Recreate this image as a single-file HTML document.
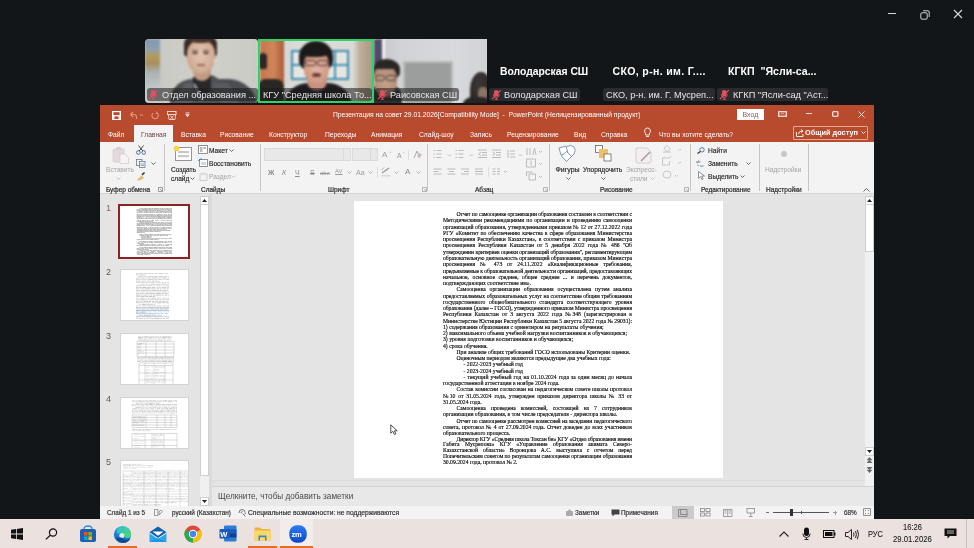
<!DOCTYPE html>
<html><head><meta charset="utf-8">
<style>
*{margin:0;padding:0;box-sizing:border-box}
html,body{width:974px;height:548px;overflow:hidden;background:#131619;font-family:"Liberation Sans",sans-serif}
#root{position:absolute;left:0;top:0;width:974px;height:548px;will-change:transform}
.a{position:absolute}
.t{position:absolute;white-space:nowrap;line-height:1}
svg{position:absolute;overflow:visible}
/* zoom tiles */
.tile{position:absolute;top:39px;height:64px;overflow:hidden}
.lbl{position:absolute;top:88px;height:13px;background:rgba(28,28,30,.55);border-radius:3px;color:#e6e6e6;font-size:9.2px;line-height:14.5px;white-space:nowrap;overflow:hidden}
.bold{position:absolute;top:66px;color:#fff;font-weight:bold;font-size:10.6px;line-height:11px;white-space:nowrap}
/* ppt */
.tab{position:absolute;top:131px;color:#fff;font-size:6.7px;line-height:7px;white-space:nowrap}
.rs{position:absolute;top:144px;width:1px;height:47px;background:#c6c6c6}
.gl{position:absolute;top:186px;font-size:6.5px;line-height:7px;color:#2a2a2a;white-space:nowrap;-webkit-text-stroke:0.2px #2a2a2a}
.rt{position:absolute;font-size:6.6px;line-height:7px;color:#262626;white-space:nowrap;-webkit-text-stroke:0.15px #262626}
.rtg{position:absolute;font-size:6.6px;line-height:7px;color:#a4a4a4;white-space:nowrap}
.thumb{position:absolute;left:120px;width:69px;height:52px;background:#fff;border:1px solid #d4d4d4;overflow:hidden}
.num{position:absolute;left:106px;font-size:9px;line-height:9px;color:#5a5a5a}
#slide{position:absolute;left:354px;top:201px;width:369px;height:277px;background:#fff}
#doc{position:absolute;left:89px;top:10px;width:189px;font-family:"Liberation Serif",serif;font-size:5.68px;line-height:6.19px;color:#000;white-space:nowrap;-webkit-text-stroke:0.12px #000}
#doc div{position:absolute;left:0;width:189px;height:6.19px;white-space:nowrap}
#doc .j{text-align:justify;text-align-last:justify}
#doc .i1{padding-left:13.5px}
#doc .i2{padding-left:20.5px}
.st{position:absolute;top:509px;font-size:6.4px;line-height:7px;color:#2a2a2a;white-space:nowrap;-webkit-text-stroke:0.15px #2a2a2a}
</style></head><body><div id="root">

<!-- zoom window controls -->
<div class="a" style="left:888px;top:13px;width:8px;height:1px;background:#d8d8d8"></div>
<svg style="left:919.5px;top:9.5px" width="12" height="11"><rect x="0.8" y="2.8" width="6.4" height="6.4" rx="1.2" fill="none" stroke="#d0d0d0" stroke-width="1"/><path d="M3 0.8 H8 Q9.2 0.8 9.2 2 V7" fill="none" stroke="#d0d0d0" stroke-width="1"/></svg>
<svg style="left:953px;top:9px" width="10" height="10"><path d="M1 1 L9 9 M9 1 L1 9" stroke="#d8d8d8" stroke-width="1.1"/></svg>

<!-- ===== video tiles ===== -->
<!-- tile 1 -->
<div class="tile" style="left:145px;width:113px;border-radius:4px;background:#cacac5">
 <div class="a" style="left:0;top:0;width:113px;height:64px;filter:blur(0.8px)">
  <div class="a" style="left:0;top:0;width:113px;height:64px;background:linear-gradient(90deg,#c2c4c4 0,#cbcbc6 20%,#d0d0cb 55%,#cbcbc5 100%)"></div>
  <div class="a" style="left:0;top:0;width:15px;height:64px;background:linear-gradient(180deg,#8298b0 0,#8fa0b0 16%,#b29a5e 26%,#a8905a 38%,#a9b2b6 52%,#bfc5c7 75%,#c8c9c6 100%)"></div>
  <!-- jacket -->
  <div class="a" style="left:25px;top:40px;width:88px;height:30px;background:#4a4c50;border-radius:30px 40px 0 0"></div>
  <div class="a" style="left:40px;top:35px;width:40px;height:30px;background:#4e5054;border-radius:20px 20px 0 0"></div>
  <div class="a" style="left:33px;top:44px;width:18px;height:24px;background:#5c5e62;transform:skewX(-28deg)"></div>
  <div class="a" style="left:72px;top:44px;width:18px;height:24px;background:#585a5e;transform:skewX(28deg)"></div>
  <div class="a" style="left:48px;top:38px;width:18px;height:18px;background:#28282a;border-radius:0 0 9px 9px"></div>
  <div class="a" style="left:52px;top:44px;width:2px;height:18px;background:#b8b8b8;transform:rotate(-25deg)"></div>
  <!-- neck -->
  <div class="a" style="left:48px;top:30px;width:18px;height:12px;background:#c39a82;border-radius:0 0 9px 9px"></div>
  <!-- hair -->
  <div class="a" style="left:39px;top:-4px;width:33px;height:22px;background:#3b2b24;border-radius:40% 40% 15% 15%"></div>
  <!-- face -->
  <div class="a" style="left:42px;top:2px;width:28px;height:33px;background:radial-gradient(ellipse at 50% 40%,#e2c3b0 0,#d4b09a 55%,#bb947e 100%);border-radius:38% 38% 50% 50%"></div>
  <div class="a" style="left:46px;top:0;width:20px;height:4px;background:#4a372e;border-radius:0 0 50% 50%"></div>
  <div class="a" style="left:47px;top:11px;width:6px;height:1px;background:#6a4a3e"></div>
  <div class="a" style="left:58px;top:11px;width:6px;height:1px;background:#6a4a3e"></div>
  <div class="a" style="left:47px;top:13px;width:6px;height:2px;background:#4a342c;border-radius:50%"></div>
  <div class="a" style="left:58px;top:13px;width:6px;height:2px;background:#4a342c;border-radius:50%"></div>
  <div class="a" style="left:52px;top:25px;width:8px;height:2px;background:#9a6a5e;border-radius:1px"></div>
  <div class="a" style="left:69px;top:21px;width:2px;height:2px;background:#f0f0f0;border-radius:50%"></div>
 </div>
</div>
<!-- tile 2 (active speaker) -->
<div class="tile" style="left:258px;width:116px;background:#d8d9d7">
 <div class="a" style="left:0;top:0;width:116px;height:64px;filter:blur(0.8px)">
  <div class="a" style="left:0;top:0;width:116px;height:64px;background:linear-gradient(90deg,#cfd0ce 0,#dcdddb 40%,#dadad6 82%,#bcae98 88%,#a89682 100%)"></div>
  <!-- door -->
  <div class="a" style="left:2px;top:0;width:24px;height:52px;background:linear-gradient(90deg,#c27650 0,#d08658 55%,#b86a44 85%,#a65c3a 100%)"></div>
  <div class="a" style="left:1px;top:14px;width:8px;height:16px;background:#2e2624;border-radius:4px 4px 2px 2px"></div>
  <div class="a" style="left:0;top:40px;width:26px;height:26px;background:#2a2624;border-radius:8px 8px 0 0"></div>
  <!-- blue frame -->
  <div class="a" style="left:33px;top:11px;width:58px;height:30px;border:2px solid #3f8db2;background:#e6e6e0"></div>
  <div class="a" style="left:76px;top:11px;width:2px;height:30px;background:#3f8db2"></div>
  <div class="a" style="left:33px;top:25px;width:58px;height:2px;background:#3f8db2"></div>
  <!-- clothing -->
  <div class="a" style="left:26px;top:44px;width:68px;height:24px;background:#1d1d20;border-radius:28px 28px 0 0"></div>
  <div class="a" style="left:49px;top:40px;width:20px;height:12px;background:#c89080;border-radius:0 0 10px 10px"></div>
  <!-- hair -->
  <div class="a" style="left:41px;top:2px;width:34px;height:30px;background:#1c1919;border-radius:50% 50% 35% 35%"></div>
  <!-- face -->
  <div class="a" style="left:46px;top:13px;width:25px;height:33px;background:radial-gradient(ellipse at 50% 50%,#e2b2a0 0,#d49e88 55%,#b88070 100%);border-radius:35% 35% 50% 50%"></div>
  <div class="a" style="left:45px;top:10px;width:27px;height:8px;background:#1c1919;border-radius:40% 40% 50% 30%"></div>
  <!-- glasses -->
  <div class="a" style="left:47px;top:21px;width:11px;height:6px;border:1px solid #4a3835;border-radius:2px"></div>
  <div class="a" style="left:59px;top:21px;width:11px;height:6px;border:1px solid #4a3835;border-radius:2px"></div>
  <div class="a" style="left:54px;top:34px;width:9px;height:4px;background:#6a3a34;border-radius:50%"></div>
 </div>
 <div class="a" style="left:0;top:0;width:116px;height:64px;border:2px solid #2bd468"></div>
</div>
<!-- tile 3 -->
<div class="tile" style="left:374px;width:113px;background:#d6d7da">
 <div class="a" style="left:0;top:0;width:113px;height:64px;filter:blur(0.9px)">
  <div class="a" style="left:0;top:0;width:113px;height:64px;background:linear-gradient(90deg,#c4c5c9 0,#d2d3d6 25%,#d8d9dc 70%,#d2d3d6 100%)"></div>
  <div class="a" style="left:0;top:0;width:8px;height:26px;background:#4f4c66"></div>
  <div class="a" style="left:8px;top:0;width:3px;height:26px;background:#f4f4f6"></div>
  <div class="a" style="left:29px;top:22px;width:50px;height:44px;background:#9b9e9c;border:2px solid #b8bbb9"></div>
  <!-- man -->
  <div class="a" style="left:-6px;top:46px;width:34px;height:22px;background:#2f2e30;border-radius:12px 12px 0 0"></div>
  <div class="a" style="left:-1px;top:20px;width:27px;height:20px;background:#2a2626;border-radius:50% 50% 30% 30%"></div>
  <div class="a" style="left:0;top:27px;width:23px;height:31px;background:radial-gradient(ellipse at 50% 50%,#c8a28a 0,#b48e78 65%,#8e6c5a 100%);border-radius:30% 40% 50% 50%"></div>
  <div class="a" style="left:0;top:25px;width:24px;height:5px;background:#2a2626;border-radius:30% 50% 40% 20%"></div>
  <div class="a" style="left:1px;top:36px;width:10px;height:6px;border:1px solid #4a4444;border-radius:2px"></div>
  <div class="a" style="left:12px;top:36px;width:10px;height:6px;border:1px solid #4a4444;border-radius:2px"></div>
  <!-- right person -->
  <div class="a" style="left:96px;top:33px;width:22px;height:36px;background:radial-gradient(ellipse at 40% 30%,#3c3736 0,#2a2625 70%);border-radius:50% 50% 10% 10%"></div>
  <div class="a" style="left:104px;top:48px;width:10px;height:14px;background:#8a7466;border-radius:40%"></div>
  <div class="a" style="left:88px;top:58px;width:30px;height:10px;background:#262425;border-radius:10px 10px 0 0"></div>
 </div>
</div>
<div class="lbl" style="left:147px;width:111px;padding-left:15px">Отдел образования ...</div>
<div class="lbl" style="left:261px;width:111px;padding-left:2px">КГУ "Средняя школа То...</div>
<div class="lbl" style="left:375px;width:84px;padding-left:15px">Раисовская СШ</div>
<div class="lbl" style="background:#2a2c30;left:489px;width:91px;padding-left:15px">Володарская СШ</div>
<div class="lbl" style="background:#2a2c30;left:603px;width:112px;padding-left:3px">СКО, р-н. им. Г. Мусреп...</div>
<div class="lbl" style="background:#2a2c30;left:717px;width:111px;padding-left:16px">КГКП "Ясли-сад "Аст...</div>
<!-- muted mic icons -->
<svg style="left:148px;top:89px" width="10" height="11"><path d="M4.3 1.2 h2 a1.2 1.2 0 0 1 1.2 1.2 v3 a2.2 2.2 0 0 1 -4.4 0 v-3 a1.2 1.2 0 0 1 1.2 -1.2 z" fill="#e4505e"/><path d="M2.3 5 Q2.3 8.6 5.3 8.6 Q8.3 8.6 8.3 5 M5.3 8.6 V10.3 M3.6 10.3 H7" fill="none" stroke="#e4505e" stroke-width="0.9"/><path d="M1 10.2 L9.8 1.2" stroke="#e4505e" stroke-width="1.1"/></svg>
<svg style="left:377px;top:89px" width="10" height="11"><path d="M4.3 1.2 h2 a1.2 1.2 0 0 1 1.2 1.2 v3 a2.2 2.2 0 0 1 -4.4 0 v-3 a1.2 1.2 0 0 1 1.2 -1.2 z" fill="#e4505e"/><path d="M2.3 5 Q2.3 8.6 5.3 8.6 Q8.3 8.6 8.3 5 M5.3 8.6 V10.3 M3.6 10.3 H7" fill="none" stroke="#e4505e" stroke-width="0.9"/><path d="M1 10.2 L9.8 1.2" stroke="#e4505e" stroke-width="1.1"/></svg>
<svg style="left:491px;top:89px" width="10" height="11"><path d="M4.3 1.2 h2 a1.2 1.2 0 0 1 1.2 1.2 v3 a2.2 2.2 0 0 1 -4.4 0 v-3 a1.2 1.2 0 0 1 1.2 -1.2 z" fill="#e4505e"/><path d="M2.3 5 Q2.3 8.6 5.3 8.6 Q8.3 8.6 8.3 5 M5.3 8.6 V10.3 M3.6 10.3 H7" fill="none" stroke="#e4505e" stroke-width="0.9"/><path d="M1 10.2 L9.8 1.2" stroke="#e4505e" stroke-width="1.1"/></svg>
<svg style="left:719px;top:89px" width="10" height="11"><path d="M4.3 1.2 h2 a1.2 1.2 0 0 1 1.2 1.2 v3 a2.2 2.2 0 0 1 -4.4 0 v-3 a1.2 1.2 0 0 1 1.2 -1.2 z" fill="#e4505e"/><path d="M2.3 5 Q2.3 8.6 5.3 8.6 Q8.3 8.6 8.3 5 M5.3 8.6 V10.3 M3.6 10.3 H7" fill="none" stroke="#e4505e" stroke-width="0.9"/><path d="M1 10.2 L9.8 1.2" stroke="#e4505e" stroke-width="1.1"/></svg>
<div class="bold" style="left:500px;font-size:10.35px">Володарская СШ</div>
<div class="bold" style="left:612.5px;letter-spacing:0.32px">СКО, р-н. им. Г....</div>
<div class="bold" style="left:728px">КГКП&nbsp; "Ясли-са...</div>

<!-- ===== PowerPoint window ===== -->
<div class="a" style="left:100px;top:105px;width:774px;height:37px;background:#b84a2e"></div>
<!-- QAT -->
<svg style="left:112px;top:111px" width="9" height="9"><rect x="0.5" y="0.5" width="8" height="8" fill="#fbe9e4" stroke="#fff"/><rect x="1.5" y="1.2" width="6" height="2.8" fill="#b84a2e"/><rect x="2.5" y="5.5" width="4" height="2.5" fill="#b84a2e"/></svg>
<svg style="left:128px;top:111px" width="18" height="9"><path d="M2.5 3.5 L5 1 M2.5 3.5 L5 6 M2.5 3.5 H6 Q8.5 3.5 8.5 6 V8" fill="none" stroke="#e7957e" stroke-width="1.1"/><path d="M12 4 h3" stroke="#e7957e" stroke-width="1"/></svg>
<svg style="left:151px;top:111px" width="8" height="9"><path d="M6 2 A3.2 3.2 0 1 1 2 2.2" fill="none" stroke="#e7957e" stroke-width="1.1"/><path d="M5 0.5 L6.5 2 L4.5 3" fill="none" stroke="#e7957e" stroke-width="1"/></svg>
<svg style="left:167px;top:111px" width="10" height="10"><rect x="0.5" y="0.5" width="8.5" height="3" fill="none" stroke="#f6d8cf" stroke-width="1"/><path d="M1.5 4 L2 8.5 H8 L8.5 4 M3.5 4.5 L6 8 M6.5 4.5 L3.5 8" fill="none" stroke="#f6d8cf" stroke-width="0.9"/></svg>
<svg style="left:185px;top:112px" width="5" height="6"><path d="M0.5 0.8 H4.5 M0.8 2.2 H4.2 L2.5 5 Z" fill="#f6d8cf" stroke="#f6d8cf" stroke-width="0.8"/></svg>
<div class="t" style="left:333px;top:112px;font-size:6.74px;color:#fff">Презентация на совет 29.01.2026[Compatibility Mode]&nbsp; - &nbsp;PowerPoint (Нелицензированный продукт)</div>
<div class="a" style="left:737px;top:109px;width:27px;height:11px;background:#fff"></div>
<div class="t" style="left:742.5px;top:111px;font-size:7px;color:#8a6058">Вход</div>
<svg style="left:778px;top:111px" width="9" height="6"><rect x="0.7" y="0.7" width="7.6" height="4.6" fill="none" stroke="#fbe1da" stroke-width="1.3"/><path d="M3 3.5 L4.5 2 L6 3.5" fill="none" stroke="#fbe1da" stroke-width="0.9"/></svg>
<div class="a" style="left:806px;top:113px;width:6px;height:1px;background:#fbe1da"></div>
<svg style="left:831.5px;top:111px" width="7" height="6"><rect x="0.7" y="0.7" width="5.2" height="4.6" rx="0.8" fill="none" stroke="#fbe1da" stroke-width="1.3"/></svg>
<svg style="left:858px;top:111px" width="7" height="7"><path d="M0.5 0.5 L6.5 6.5 M6.5 0.5 L0.5 6.5" stroke="#fbe1da" stroke-width="1"/></svg>
<!-- tabs -->
<div class="a" style="left:134px;top:125px;width:39px;height:17px;background:#f3f3f3"></div>
<div class="tab" style="left:108px">Файл</div>
<div class="tab" style="left:141px;color:#6b4a40">Главная</div>
<div class="tab" style="left:181px">Вставка</div>
<div class="tab" style="left:220px">Рисование</div>
<div class="tab" style="left:269px">Конструктор</div>
<div class="tab" style="left:325px">Переходы</div>
<div class="tab" style="left:371px">Анимация</div>
<div class="tab" style="left:419px">Слайд-шоу</div>
<div class="tab" style="left:470px">Запись</div>
<div class="tab" style="left:507px">Рецензирование</div>
<div class="tab" style="left:574px">Вид</div>
<div class="tab" style="left:601px">Справка</div>
<svg style="left:643px;top:127px" width="9" height="11"><path d="M4.5 1 A3 3 0 0 1 6.5 6.2 V8 H2.5 V6.2 A3 3 0 0 1 4.5 1 Z M3 9.5 H6" fill="none" stroke="#fff" stroke-width="0.9"/></svg>
<div class="tab" style="left:659px">Что вы хотите сделать?</div>
<div class="a" style="left:793px;top:126px;width:75px;height:14px;border:1px solid #e9a290;border-radius:1px"></div>
<svg style="left:795.5px;top:129px" width="8" height="8"><path d="M0.5 3 V7.5 H7 V5 M2.5 5 Q3 2 6 2 M5 0.5 L7 2 L5 3.5" fill="none" stroke="#fff" stroke-width="0.9"/></svg>
<div class="t" style="left:805px;top:129px;font-size:7.35px;color:#fff;font-weight:bold">Общий доступ</div>
<svg style="left:861px;top:131px" width="5" height="4"><path d="M0.5 0.5 L2.5 2.5 L4.5 0.5" fill="none" stroke="#fff" stroke-width="0.9"/></svg>

<!-- ribbon -->
<div class="a" style="left:100px;top:142px;width:774px;height:52px;background:#f3f3f3;border-bottom:1px solid #d4d4d4"></div>
<div class="rs" style="left:164px"></div>
<div class="rs" style="left:260px"></div>
<div class="rs" style="left:427px"></div>
<div class="rs" style="left:549px"></div>
<div class="rs" style="left:690px"></div>
<div class="rs" style="left:759px"></div>
<div class="rs" style="left:808px"></div>
<div class="gl" style="left:106px">Буфер обмена</div>
<div class="gl" style="left:201px">Слайды</div>
<div class="gl" style="left:328px">Шрифт</div>
<div class="gl" style="left:475px">Абзац</div>
<div class="gl" style="left:600px">Рисование</div>
<div class="gl" style="left:701px">Редактирование</div>
<div class="gl" style="left:766px">Надстройки</div>
<!-- launchers -->
<svg style="left:158px;top:187px" width="5" height="5"><path d="M0.5 0.5 H4.5 V4.5 H0.5 Z M2 2 L4.5 4.5" fill="none" stroke="#777" stroke-width="0.7"/></svg>
<svg style="left:422px;top:187px" width="5" height="5"><path d="M0.5 0.5 H4.5 V4.5 H0.5 Z M2 2 L4.5 4.5" fill="none" stroke="#999" stroke-width="0.7"/></svg>
<svg style="left:543px;top:187px" width="5" height="5"><path d="M0.5 0.5 H4.5 V4.5 H0.5 Z M2 2 L4.5 4.5" fill="none" stroke="#999" stroke-width="0.7"/></svg>
<svg style="left:684px;top:187px" width="5" height="5"><path d="M0.5 0.5 H4.5 V4.5 H0.5 Z M2 2 L4.5 4.5" fill="none" stroke="#999" stroke-width="0.7"/></svg>
<!-- clipboard -->
<svg style="left:112px;top:146px" width="18" height="18"><rect x="1" y="3" width="11" height="13" rx="1" fill="#e4dadd" stroke="#d6cace" stroke-width="0.8"/><rect x="4" y="1" width="5" height="3" rx="1" fill="#d8cdd1"/><path d="M8 8 H13 L16.5 11.5 V17.5 H8 Z" fill="#f6f3f4" stroke="#d6cace" stroke-width="0.8"/></svg>
<div class="rtg" style="left:106px;top:166px">Вставить</div>
<svg style="left:116px;top:177px" width="5" height="3"><path d="M0.5 0.5 L2.5 2.5 L4.5 0.5" fill="none" stroke="#b5b5b5" stroke-width="0.8"/></svg>
<svg style="left:136px;top:145px" width="10" height="10"><circle cx="2.3" cy="7.5" r="1.8" fill="none" stroke="#4e6e96" stroke-width="1"/><circle cx="7.7" cy="7.5" r="1.8" fill="none" stroke="#4e6e96" stroke-width="1"/><path d="M3.2 6 L7.5 0.5 M6.8 6 L2.5 0.5" stroke="#333" stroke-width="0.9"/></svg>
<svg style="left:136px;top:159px" width="10" height="9"><rect x="0.5" y="0.5" width="5.5" height="6" fill="#f3f3f3" stroke="#6a7a8e" stroke-width="0.8"/><rect x="3.5" y="2.5" width="5.5" height="6" fill="#f3f3f3" stroke="#6a7a8e" stroke-width="0.8"/><path d="M4.5 5 h3.5 M4.5 6.5 h3.5" stroke="#6a7a8e" stroke-width="0.6"/></svg>
<svg style="left:151px;top:162px" width="5" height="3"><path d="M0.5 0.5 L2.5 2.5 L4.5 0.5" fill="none" stroke="#444" stroke-width="0.8"/></svg>
<svg style="left:136px;top:171px" width="10" height="10"><path d="M1 9 L5.5 4.5 L8 7 L3.5 9.5 Z" fill="#e8b86a"/><path d="M6 4 L8.5 1.5" stroke="#333" stroke-width="1.6"/></svg>
<!-- slides -->
<svg style="left:173px;top:145px" width="20" height="17"><rect x="2.5" y="2.5" width="16" height="13" fill="#fff" stroke="#8a8a8a" stroke-width="0.9"/><rect x="5" y="6" width="11" height="2.2" fill="#c9c9c9"/><rect x="5" y="10" width="11" height="2.2" fill="#c9c9c9"/><circle cx="3.5" cy="3.5" r="2.8" fill="#f7d54a"/></svg>
<div class="rt" style="left:171px;top:166px">Создать</div>
<div class="rt" style="left:171px;top:175px">слайд</div>
<svg style="left:190px;top:177px" width="5" height="3"><path d="M0.5 0.5 L2.5 2.5 L4.5 0.5" fill="none" stroke="#444" stroke-width="0.8"/></svg>
<svg style="left:198px;top:145px" width="10" height="9"><rect x="0.5" y="0.5" width="9" height="8" fill="#fff" stroke="#777" stroke-width="0.8"/><rect x="2" y="2" width="2.5" height="5" fill="#bbb"/><rect x="5.5" y="2" width="2.5" height="2" fill="#bbb"/></svg>
<div class="rt" style="left:209px;top:147px">Макет</div>
<svg style="left:229px;top:149px" width="5" height="3"><path d="M0.5 0.5 L2.5 2.5 L4.5 0.5" fill="none" stroke="#444" stroke-width="0.8"/></svg>
<svg style="left:198px;top:158px" width="10" height="9"><rect x="1.5" y="1.5" width="8" height="7" fill="#fff" stroke="#777" stroke-width="0.8"/><path d="M0.5 3 Q1 0.5 4 1" fill="none" stroke="#3a7ac0" stroke-width="1"/><rect x="3" y="4" width="5" height="3" fill="#cfd8e8"/></svg>
<div class="rt" style="left:209px;top:160px">Восстановить</div>
<svg style="left:199px;top:172px" width="9" height="9"><rect x="1" y="2" width="7" height="6.5" fill="none" stroke="#c9c0c4" stroke-width="0.8"/><rect x="2.5" y="0.5" width="4" height="2.5" fill="#ddd"/></svg>
<div class="rtg" style="left:209px;top:173px">Раздел</div>
<svg style="left:231px;top:175px" width="5" height="3"><path d="M0.5 0.5 L2.5 2.5 L4.5 0.5" fill="none" stroke="#bbb" stroke-width="0.8"/></svg>
<!-- font -->
<div class="a" style="left:264px;top:148px;width:87px;height:13px;background:#e8e8e8;border:1px solid #d9d9d9"></div>
<div class="a" style="left:343px;top:149px;width:1px;height:11px;background:#d9d9d9"></div>
<div class="a" style="left:352px;top:148px;width:26px;height:13px;background:#e8e8e8;border:1px solid #d9d9d9"></div>
<div class="a" style="left:370px;top:149px;width:1px;height:11px;background:#d9d9d9"></div>
<div class="t" style="left:382px;top:151px;font-size:8px;color:#9a9a9a">A</div>
<div class="t" style="left:389px;top:150px;font-size:4px;color:#9a9a9a">+</div>
<div class="t" style="left:397px;top:152px;font-size:7px;color:#9a9a9a">A</div>
<div class="t" style="left:403px;top:150px;font-size:4px;color:#9a9a9a">-</div>
<div class="a" style="left:408px;top:150px;width:1px;height:10px;background:#dedede"></div>
<svg style="left:413px;top:150px" width="9" height="9"><path d="M1 8 L4 1 L7 8" fill="none" stroke="#b0a8ac" stroke-width="1"/><path d="M4 6 L7 3 L9 5 L6 8 Z" fill="#c8bcc0"/></svg>
<div class="t" style="left:268px;top:169px;font-size:7px;color:#8a8a8a;font-weight:bold">Ж</div>
<div class="t" style="left:282px;top:169px;font-size:7px;color:#8a8a8a;font-style:italic">К</div>
<div class="t" style="left:295px;top:169px;font-size:7px;color:#8a8a8a;text-decoration:underline">Ч</div>
<div class="t" style="left:310px;top:169px;font-size:7px;color:#8a8a8a;text-decoration:line-through">S</div>
<div class="t" style="left:320px;top:170px;font-size:6px;color:#9a9a9a;text-decoration:line-through">abc</div>
<div class="t" style="left:335px;top:168px;font-size:6px;color:#9a9a9a;text-decoration:underline">AV</div>
<svg style="left:347px;top:171px" width="5" height="3"><path d="M0.5 0.5 L2.5 2.5 L4.5 0.5" fill="none" stroke="#aaa" stroke-width="0.8"/></svg>
<div class="t" style="left:356px;top:169px;font-size:7px;color:#9a9a9a">Aa</div>
<svg style="left:368px;top:171px" width="5" height="3"><path d="M0.5 0.5 L2.5 2.5 L4.5 0.5" fill="none" stroke="#aaa" stroke-width="0.8"/></svg>
<div class="a" style="left:377px;top:167px;width:1px;height:11px;background:#dedede"></div>
<svg style="left:381px;top:167px" width="10" height="10"><path d="M1 6 L8 1" stroke="#9a9a9a" stroke-width="1.4"/><path d="M0.5 3 L3 0.5" stroke="#9a9a9a" stroke-width="0.8"/><rect x="0.5" y="8" width="9" height="1.5" fill="#d8d8d8"/></svg>
<svg style="left:394px;top:171px" width="5" height="3"><path d="M0.5 0.5 L2.5 2.5 L4.5 0.5" fill="none" stroke="#aaa" stroke-width="0.8"/></svg>
<div class="t" style="left:405px;top:168px;font-size:8px;color:#8a8a8a">A</div>
<svg style="left:416px;top:171px" width="5" height="3"><path d="M0.5 0.5 L2.5 2.5 L4.5 0.5" fill="none" stroke="#aaa" stroke-width="0.8"/></svg>
<!-- paragraph -->
<svg style="left:433px;top:149px" width="90" height="10" fill="none" stroke="#b4b4b4" stroke-width="0.9">
  <path d="M0.5 1.5 h1.5 M3.5 1.5 h5 M0.5 5 h1.5 M3.5 5 h5 M0.5 8.5 h1.5 M3.5 8.5 h5"/>
  <path d="M15 5.5 l1.5 1.5 l1.5 -1.5"/>
  <path d="M22.5 1.5 h1.5 M25.5 1.5 h5 M22.5 5 h1.5 M25.5 5 h5 M22.5 8.5 h1.5 M25.5 8.5 h5"/>
  <path d="M37 5.5 l1.5 1.5 l1.5 -1.5"/>
  <path d="M45 1 h9 M49 3.5 h5 M49 6 h5 M45 8.5 h9 M48 3 l-2.5 1.8 l2.5 1.8"/>
  <path d="M59 1 h9 M63 3.5 h5 M63 6 h5 M59 8.5 h9 M59.5 3 l2.5 1.8 l-2.5 1.8"/>
  <path d="M77 2 h5 M77 5 h5 M77 8 h5 M75 1 v8"/>
  <path d="M86 5.5 l1.5 1.5 l1.5 -1.5"/>
</svg>
<svg style="left:433px;top:168px" width="75" height="8" fill="none" stroke="#b4b4b4" stroke-width="0.9">
  <path d="M0.5 1 h8 M0.5 3.5 h5 M0.5 6 h8"/>
  <path d="M14.5 1 h8 M16 3.5 h5 M14.5 6 h8"/>
  <path d="M28 1 h8 M31 3.5 h5 M28 6 h8"/>
  <path d="M42 1 h8 M42 3.5 h8 M42 6 h8"/>
  <path d="M59.5 1 h3 M64 1 h3 M59.5 3.5 h3 M64 3.5 h3 M59.5 6 h3 M64 6 h3"/>
  <path d="M71 3 l1.5 1.5 l1.5 -1.5"/>
</svg>
<div class="a" style="left:488px;top:167px;width:1px;height:10px;background:#dedede"></div>
<svg style="left:526px;top:146px" width="18" height="36" fill="none" stroke="#b4b4b4" stroke-width="0.9">
  <path d="M1 9 V2 M4 9 V2 M7 9 L8.5 2 L10 9"/>
  <path d="M13 5 l1.5 1.5 l1.5 -1.5"/>
  <path d="M0.5 13 h9 v8 h-9 z M5 14.5 v5"/>
  <path d="M13 17 l1.5 1.5 l1.5 -1.5"/>
  <path d="M0.5 26 h6 M0.5 26 v4 M3 28 h6.5 v6 h-6.5 z"/>
  <path d="M13 30 l1.5 1.5 l1.5 -1.5"/>
</svg>
<!-- drawing -->
<svg style="left:558px;top:145px" width="19" height="18" fill="none" stroke="#6f8fb5" stroke-width="0.9"><path d="M1 3 L8 1 L10 8 L3 10 Z" fill="#fff"/><path d="M9 1.5 Q13 -1 16 2 Q18.5 5 16 9 L12 13" fill="#fff"/><path d="M3.5 11 L8.5 6.5 L13.5 11.5 L8.5 16.5 Z" fill="#fff"/></svg>
<div class="rt" style="left:555.5px;top:166px;font-size:7px">Фигуры</div>
<svg style="left:566px;top:177px" width="5" height="3"><path d="M0.5 0.5 L2.5 2.5 L4.5 0.5" fill="none" stroke="#444" stroke-width="0.8"/></svg>
<svg style="left:595px;top:145px" width="17" height="17"><rect x="0.5" y="0.5" width="7" height="7" fill="#fff" stroke="#666" stroke-width="0.8"/><rect x="4" y="4" width="9" height="9" fill="#efbf6a"/><rect x="9" y="9" width="7" height="7" fill="#fff" stroke="#666" stroke-width="0.8"/></svg>
<div class="rt" style="left:583px;top:166px">Упорядочить</div>
<svg style="left:601px;top:177px" width="5" height="3"><path d="M0.5 0.5 L2.5 2.5 L4.5 0.5" fill="none" stroke="#444" stroke-width="0.8"/></svg>
<svg style="left:634px;top:146px" width="19" height="18"><path d="M2 2 H13 L17 6 V15 Q17 17 15 17 H4 Q2 17 2 15 Z" fill="#f3eef0" stroke="#d3c9cd" stroke-width="0.9"/><path d="M7 15 L16 6" stroke="#a9a0a4" stroke-width="1.6"/></svg>
<div class="rtg" style="left:626px;top:166px">Экспресс-</div>
<div class="rtg" style="left:630px;top:175px">стили</div>
<svg style="left:650px;top:177px" width="5" height="3"><path d="M0.5 0.5 L2.5 2.5 L4.5 0.5" fill="none" stroke="#bbb" stroke-width="0.8"/></svg>
<svg style="left:662px;top:145px" width="20" height="36" fill="none" stroke="#c8c0c4" stroke-width="0.9">
  <path d="M2 3 L5 0.5 L8.5 4 L5 7 Z M1 7 h8" />
  <path d="M16 4 l1.5 1.5 l1.5 -1.5"/>
  <path d="M0.5 13 h7 l2 -2 M0.5 13 v7 h7 v-4"/>
  <path d="M16 17 l1.5 1.5 l1.5 -1.5"/>
  <path d="M1 30 Q1 26 5 26 Q9 26 9 30 Q9 33 5 33 Q1 33 1 30"/>
  <path d="M13 30 l1.5 1.5 l1.5 -1.5"/>
</svg>
<!-- editing -->
<svg style="left:697px;top:147px" width="8" height="7"><circle cx="5" cy="2.8" r="2.2" fill="none" stroke="#3f6fb0" stroke-width="0.9"/><path d="M3.4 4.4 L0.5 6.5" stroke="#333" stroke-width="1.2"/></svg>
<div class="rt" style="left:708px;top:147px">Найти</div>
<svg style="left:696px;top:159px" width="10" height="8"><text x="0" y="3.5" font-size="4" font-family="Liberation Sans" fill="#555">ab</text><text x="4" y="7.5" font-size="4" font-family="Liberation Sans" fill="#3f6fb0">ac</text><path d="M1 5.5 L3 7" stroke="#3f6fb0" stroke-width="0.6"/></svg>
<div class="rt" style="left:708px;top:160px">Заменить</div>
<svg style="left:746px;top:162px" width="5" height="3"><path d="M0.5 0.5 L2.5 2.5 L4.5 0.5" fill="none" stroke="#444" stroke-width="0.8"/></svg>
<svg style="left:698px;top:171px" width="7" height="9"><path d="M0.5 0.5 V7.5 L2.5 5.5 L4 8.5 L5 8 L3.8 5 H6.5 Z" fill="#fff" stroke="#666" stroke-width="0.7"/></svg>
<div class="rt" style="left:708px;top:173px">Выделить</div>
<svg style="left:740px;top:175px" width="5" height="3"><path d="M0.5 0.5 L2.5 2.5 L4.5 0.5" fill="none" stroke="#444" stroke-width="0.8"/></svg>
<!-- addins -->
<div class="a" style="left:781px;top:151px;width:6px;height:6px;border-radius:50%;background:#c8c8c8"></div>
<div class="rtg" style="left:765px;top:166px">Надстройки</div>
<svg style="left:863px;top:188px" width="7" height="4"><path d="M0.5 3.5 L3.5 0.5 L6.5 3.5" fill="none" stroke="#555" stroke-width="0.9"/></svg>

<!-- main area -->
<div class="a" style="left:100px;top:194px;width:774px;height:313px;background:#e4e4e4"></div>
<!-- left panel thumbnails -->
<div class="a" style="left:118px;top:204px;width:72px;height:55px;border:2px solid #8a2424;background:#fff;overflow:hidden"><div class="a" style="left:0;top:0;width:369px;height:277px;transform:scale(0.187);transform-origin:0 0;opacity:.62"><div id="doc" class="doc2">
<div class="i1 j" style="letter-spacing:-0.0901px;top:0.20px">Отчет по самооценке организации образования составлен в соответствии с</div>
<div class="j" style="top:6.46px">Методическими рекомендациями по организации и проведению самооценки</div>
<div class="j" style="top:12.71px">организаций образования, утвержденными приказом № 12 от 27.12.2022 года</div>
<div class="j" style="top:18.97px">РГУ «Комитет по обеспечению качества в сфере образования Министерства</div>
<div class="j" style="top:25.22px">просвещения Республики Казахстан», в соответствии с приказом Министра</div>
<div class="j" style="top:31.48px">просвещения Республики Казахстан от 5 декабря 2022 года № 486 "Об</div>
<div class="j" style="letter-spacing:-0.0629px;top:37.73px">утверждении критериев оценки организаций образования", регламентирующим</div>
<div class="j" style="letter-spacing:-0.0155px;top:43.99px">образовательную деятельность организаций образования, приказом Министра</div>
<div class="j" style="top:50.24px">просвещения № 473 от 24.11.2022 «Квалификационные требования,</div>
<div class="j" style="letter-spacing:-0.1027px;top:56.50px">предъявляемые к образовательной деятельности организаций, предоставляющих</div>
<div class="j" style="top:62.75px">начальное, основное среднее, общее среднее ... и перечень документов,</div>
<div class="" style="top:69.00px">подтверждающих соответствие им».</div>
<div class="i1 j" style="top:75.26px">Самооценка организации образования осуществлена путем анализа</div>
<div class="j" style="letter-spacing:-0.0257px;top:81.52px">предоставляемых образовательных услуг на соответствие общим требованиям</div>
<div class="j" style="top:87.77px">государственного общеобязательного стандарта соответствующего уровня</div>
<div class="j" style="letter-spacing:-0.051px;top:94.03px">образования (далее – ГОСО), утвержденного приказом Министра просвещения</div>
<div class="j" style="top:100.28px">Республики Казахстан от 3 августа 2022 года №348 (зарегистрирован в</div>
<div class="j" style="top:106.54px">Министерстве Юстиции Республики Казахстан 5 августа 2022 года № 29031):</div>
<div class="" style="top:112.79px">1) содержания образования с ориентиром на результаты обучения;</div>
<div class="" style="top:119.05px">2) максимального объема учебной нагрузки воспитанников и обучающихся;</div>
<div class="" style="top:125.30px">3) уровня подготовки воспитанников и обучающихся;</div>
<div class="" style="top:131.56px">4) срока обучения.</div>
<div class="i1" style="top:137.81px">При анализе общих требований ГОСО использованы Критерии оценки.</div>
<div class="i1" style="top:144.06px">Оценочным периодом являются предыдущие два учебных года:</div>
<div class="i2" style="top:150.32px">- 2022-2023 учебный год</div>
<div class="i2" style="top:156.57px">- 2023-2024 учебный год</div>
<div class="i2 j" style="top:162.83px">- текущий учебный год на 01.10.2024 года за один месяц до начала</div>
<div class="" style="top:169.08px">государственной аттестации в ноябре 2024 года.</div>
<div class="i1 j" style="top:175.34px">Состав комиссии согласован на педагогическом совете школы протокол</div>
<div class="j" style="top:181.60px">№10 от 31.05.2024 года, утвержден приказом директора школы № 33 от</div>
<div class="" style="top:187.85px">31.05.2024 года.</div>
<div class="i1 j" style="top:194.11px">Самооценка проведена комиссией, состоящей из 7 сотрудников</div>
<div class="" style="top:200.36px">организации образования, в том числе председателя - директора школы.</div>
<div class="i1 j" style="letter-spacing:-0.0839px;top:206.62px">Отчет по самооценке рассмотрен комиссией на заседании педагогического</div>
<div class="j" style="top:212.87px">совета, протокол № 4 от 27.09.2024 года. Отчет доведен до всех участников</div>
<div class="" style="top:219.12px">образовательного процесса.</div>
<div class="i1 j" style="letter-spacing:-0.1328px;top:224.50px">Директор КГУ «Средняя школа Токсан би» КГУ «Отдел образования имени</div>
<div class="j" style="top:230.33px">Габита Мусрепова» КГУ «Управление образования акимата Северо-</div>
<div class="j" style="top:236.16px">Казахстанской области» Воронцова А.С. выступила с отчетом перед</div>
<div class="j" style="letter-spacing:-0.0498px;top:241.99px">Попечительским советом по результатам самооценки организации образования</div>
<div class="" style="top:247.82px">30.09.2024 года, протокол № 2.</div>
</div></div></div>
<div class="thumb" style="top:269px"><svg style="left:0;top:0" width="69" height="52"><rect x="15.00" y="3.00" width="1.84" height="0.75" fill="#555" opacity="0.35"/><rect x="17.54" y="3.00" width="4.44" height="0.75" fill="#555" opacity="0.33"/><rect x="22.68" y="3.00" width="2.73" height="0.75" fill="#555" opacity="0.32"/><rect x="26.12" y="3.00" width="3.93" height="0.75" fill="#555" opacity="0.32"/><rect x="30.74" y="3.00" width="2.13" height="0.75" fill="#555" opacity="0.30"/><rect x="33.58" y="3.00" width="3.07" height="0.75" fill="#555" opacity="0.34"/><rect x="37.35" y="3.00" width="5.48" height="0.75" fill="#555" opacity="0.36"/><rect x="43.53" y="3.00" width="3.68" height="0.75" fill="#555" opacity="0.30"/><rect x="15.00" y="4.55" width="2.77" height="0.75" fill="#555" opacity="0.34"/><rect x="18.47" y="4.55" width="5.07" height="0.75" fill="#555" opacity="0.36"/><rect x="24.24" y="4.55" width="1.11" height="0.75" fill="#555" opacity="0.32"/><rect x="17.64" y="6.10" width="3.54" height="0.75" fill="#555" opacity="0.38"/><rect x="21.88" y="6.10" width="4.20" height="0.75" fill="#555" opacity="0.27"/><rect x="26.78" y="6.10" width="5.07" height="0.75" fill="#555" opacity="0.36"/><rect x="32.55" y="6.10" width="4.44" height="0.75" fill="#555" opacity="0.37"/><rect x="37.69" y="6.10" width="4.55" height="0.75" fill="#555" opacity="0.36"/><rect x="42.94" y="6.10" width="2.92" height="0.75" fill="#555" opacity="0.38"/><rect x="46.56" y="6.10" width="1.44" height="0.75" fill="#555" opacity="0.27"/><rect x="15.00" y="7.65" width="3.62" height="0.75" fill="#555" opacity="0.36"/><rect x="19.32" y="7.65" width="5.20" height="0.75" fill="#555" opacity="0.36"/><rect x="25.22" y="7.65" width="4.83" height="0.75" fill="#555" opacity="0.34"/><rect x="30.75" y="7.65" width="5.03" height="0.75" fill="#555" opacity="0.42"/><rect x="36.48" y="7.65" width="3.34" height="0.75" fill="#555" opacity="0.37"/><rect x="40.52" y="7.65" width="5.18" height="0.75" fill="#555" opacity="0.39"/><rect x="46.40" y="7.65" width="1.60" height="0.75" fill="#555" opacity="0.32"/><rect x="15.00" y="9.20" width="5.13" height="0.75" fill="#555" opacity="0.29"/><rect x="20.83" y="9.20" width="5.15" height="0.75" fill="#555" opacity="0.29"/><rect x="26.68" y="9.20" width="5.33" height="0.75" fill="#555" opacity="0.35"/><rect x="32.71" y="9.20" width="3.52" height="0.75" fill="#555" opacity="0.32"/><rect x="36.92" y="9.20" width="4.11" height="0.75" fill="#555" opacity="0.33"/><rect x="41.73" y="9.20" width="2.75" height="0.75" fill="#555" opacity="0.28"/><rect x="45.18" y="9.20" width="2.82" height="0.75" fill="#555" opacity="0.38"/><rect x="15.00" y="10.75" width="5.13" height="0.75" fill="#555" opacity="0.34"/><rect x="20.83" y="10.75" width="4.48" height="0.75" fill="#555" opacity="0.32"/><rect x="26.01" y="10.75" width="4.11" height="0.75" fill="#555" opacity="0.35"/><rect x="30.82" y="10.75" width="2.41" height="0.75" fill="#555" opacity="0.45"/><rect x="33.93" y="10.75" width="1.93" height="0.75" fill="#555" opacity="0.40"/><rect x="36.55" y="10.75" width="1.88" height="0.75" fill="#555" opacity="0.35"/><rect x="15.00" y="12.30" width="4.37" height="0.75" fill="#555" opacity="0.28"/><rect x="20.07" y="12.30" width="2.95" height="0.75" fill="#555" opacity="0.30"/><rect x="23.72" y="12.30" width="4.19" height="0.75" fill="#555" opacity="0.29"/><rect x="28.61" y="12.30" width="5.32" height="0.75" fill="#555" opacity="0.28"/><rect x="34.63" y="12.30" width="4.42" height="0.75" fill="#555" opacity="0.28"/><rect x="39.74" y="12.30" width="2.52" height="0.75" fill="#555" opacity="0.40"/><rect x="42.97" y="12.30" width="2.13" height="0.75" fill="#555" opacity="0.31"/><rect x="45.80" y="12.30" width="2.20" height="0.75" fill="#555" opacity="0.34"/><rect x="17.64" y="13.85" width="1.65" height="0.75" fill="#555" opacity="0.30"/><rect x="19.99" y="13.85" width="3.96" height="0.75" fill="#555" opacity="0.35"/><rect x="24.65" y="13.85" width="1.95" height="0.75" fill="#555" opacity="0.30"/><rect x="27.30" y="13.85" width="1.62" height="0.75" fill="#555" opacity="0.31"/><rect x="29.62" y="13.85" width="4.56" height="0.75" fill="#555" opacity="0.35"/><rect x="34.89" y="13.85" width="5.11" height="0.75" fill="#555" opacity="0.35"/><rect x="40.69" y="13.85" width="4.95" height="0.75" fill="#555" opacity="0.35"/><rect x="46.34" y="13.85" width="1.66" height="0.75" fill="#555" opacity="0.28"/><rect x="15.00" y="15.40" width="3.29" height="0.75" fill="#555" opacity="0.36"/><rect x="18.99" y="15.40" width="2.01" height="0.75" fill="#555" opacity="0.32"/><rect x="21.70" y="15.40" width="3.07" height="0.75" fill="#555" opacity="0.31"/><rect x="25.47" y="15.40" width="2.08" height="0.75" fill="#555" opacity="0.37"/><rect x="28.25" y="15.40" width="2.54" height="0.75" fill="#555" opacity="0.33"/><rect x="31.48" y="15.40" width="3.18" height="0.75" fill="#555" opacity="0.25"/><rect x="35.36" y="15.40" width="3.73" height="0.75" fill="#555" opacity="0.27"/><rect x="39.80" y="15.40" width="1.73" height="0.75" fill="#555" opacity="0.25"/><rect x="42.22" y="15.40" width="2.14" height="0.75" fill="#555" opacity="0.26"/><rect x="45.07" y="15.40" width="2.93" height="0.75" fill="#555" opacity="0.31"/><rect x="15.00" y="16.95" width="2.43" height="0.75" fill="#555" opacity="0.42"/><rect x="18.13" y="16.95" width="2.50" height="0.75" fill="#555" opacity="0.44"/><rect x="21.33" y="16.95" width="4.00" height="0.75" fill="#555" opacity="0.48"/><rect x="26.03" y="16.95" width="4.34" height="0.75" fill="#555" opacity="0.38"/><rect x="31.07" y="16.95" width="3.19" height="0.75" fill="#555" opacity="0.43"/><rect x="34.96" y="16.95" width="1.52" height="0.75" fill="#555" opacity="0.34"/><rect x="37.18" y="16.95" width="3.13" height="0.75" fill="#555" opacity="0.36"/><rect x="41.01" y="16.95" width="4.40" height="0.75" fill="#555" opacity="0.38"/><rect x="46.11" y="16.95" width="1.89" height="0.75" fill="#555" opacity="0.37"/><rect x="15.00" y="18.50" width="3.36" height="0.75" fill="#555" opacity="0.34"/><rect x="19.06" y="18.50" width="4.07" height="0.75" fill="#555" opacity="0.32"/><rect x="23.82" y="18.50" width="5.13" height="0.75" fill="#555" opacity="0.44"/><rect x="29.65" y="18.50" width="4.42" height="0.75" fill="#555" opacity="0.36"/><rect x="34.77" y="18.50" width="3.55" height="0.75" fill="#555" opacity="0.38"/><rect x="39.01" y="18.50" width="1.70" height="0.75" fill="#555" opacity="0.35"/><rect x="41.42" y="18.50" width="3.60" height="0.75" fill="#555" opacity="0.32"/><rect x="45.72" y="18.50" width="1.88" height="0.75" fill="#555" opacity="0.41"/><rect x="15.00" y="20.05" width="3.94" height="0.75" fill="#555" opacity="0.38"/><rect x="19.64" y="20.05" width="5.43" height="0.75" fill="#555" opacity="0.39"/><rect x="25.78" y="20.05" width="1.58" height="0.75" fill="#555" opacity="0.45"/><rect x="28.05" y="20.05" width="1.90" height="0.75" fill="#555" opacity="0.38"/><rect x="30.66" y="20.05" width="4.86" height="0.75" fill="#555" opacity="0.45"/><rect x="36.22" y="20.05" width="1.56" height="0.75" fill="#555" opacity="0.41"/><rect x="38.48" y="20.05" width="3.14" height="0.75" fill="#555" opacity="0.41"/><rect x="42.33" y="20.05" width="2.33" height="0.75" fill="#555" opacity="0.43"/><rect x="45.36" y="20.05" width="1.80" height="0.75" fill="#555" opacity="0.38"/><rect x="15.00" y="21.60" width="4.52" height="0.75" fill="#555" opacity="0.27"/><rect x="20.22" y="21.60" width="3.79" height="0.75" fill="#555" opacity="0.29"/><rect x="24.71" y="21.60" width="3.35" height="0.75" fill="#555" opacity="0.34"/><rect x="28.76" y="21.60" width="3.08" height="0.75" fill="#555" opacity="0.26"/><rect x="32.54" y="21.60" width="1.99" height="0.75" fill="#555" opacity="0.25"/><rect x="35.23" y="21.60" width="4.90" height="0.75" fill="#555" opacity="0.33"/><rect x="40.83" y="21.60" width="5.34" height="0.75" fill="#555" opacity="0.33"/><rect x="46.87" y="21.60" width="1.13" height="0.75" fill="#555" opacity="0.33"/><rect x="15.00" y="23.15" width="2.93" height="0.75" fill="#555" opacity="0.36"/><rect x="18.63" y="23.15" width="4.69" height="0.75" fill="#555" opacity="0.33"/><rect x="24.03" y="23.15" width="3.61" height="0.75" fill="#555" opacity="0.36"/><rect x="28.33" y="23.15" width="5.32" height="0.75" fill="#555" opacity="0.41"/><rect x="34.35" y="23.15" width="5.23" height="0.75" fill="#555" opacity="0.41"/><rect x="40.28" y="23.15" width="2.69" height="0.75" fill="#555" opacity="0.32"/><rect x="43.66" y="23.15" width="3.46" height="0.75" fill="#555" opacity="0.33"/><rect x="15.00" y="24.70" width="3.84" height="0.75" fill="#555" opacity="0.47"/><rect x="19.54" y="24.70" width="1.88" height="0.75" fill="#555" opacity="0.39"/><rect x="22.13" y="24.70" width="5.49" height="0.75" fill="#555" opacity="0.35"/><rect x="28.32" y="24.70" width="3.17" height="0.75" fill="#555" opacity="0.34"/><rect x="32.19" y="24.70" width="1.84" height="0.75" fill="#555" opacity="0.49"/><rect x="34.73" y="24.70" width="5.45" height="0.75" fill="#555" opacity="0.44"/><rect x="40.88" y="24.70" width="2.01" height="0.75" fill="#555" opacity="0.38"/><rect x="43.60" y="24.70" width="2.43" height="0.75" fill="#555" opacity="0.45"/><rect x="46.73" y="24.70" width="1.27" height="0.75" fill="#555" opacity="0.41"/><rect x="15.00" y="26.25" width="4.52" height="0.75" fill="#555" opacity="0.35"/><rect x="20.22" y="26.25" width="3.57" height="0.75" fill="#555" opacity="0.46"/><rect x="24.49" y="26.25" width="2.53" height="0.75" fill="#555" opacity="0.49"/><rect x="27.72" y="26.25" width="3.34" height="0.75" fill="#555" opacity="0.46"/><rect x="31.76" y="26.25" width="2.06" height="0.75" fill="#555" opacity="0.51"/><rect x="15.00" y="27.80" width="3.26" height="0.75" fill="#555" opacity="0.25"/><rect x="18.96" y="27.80" width="3.88" height="0.75" fill="#555" opacity="0.37"/><rect x="23.55" y="27.80" width="2.22" height="0.75" fill="#555" opacity="0.32"/><rect x="26.47" y="27.80" width="3.43" height="0.75" fill="#555" opacity="0.31"/><rect x="30.60" y="27.80" width="4.34" height="0.75" fill="#555" opacity="0.38"/><rect x="35.64" y="27.80" width="4.32" height="0.75" fill="#555" opacity="0.31"/><rect x="40.66" y="27.80" width="5.35" height="0.75" fill="#555" opacity="0.30"/><rect x="46.71" y="27.80" width="1.29" height="0.75" fill="#555" opacity="0.34"/><rect x="15.00" y="29.35" width="3.98" height="0.75" fill="#555" opacity="0.31"/><rect x="19.68" y="29.35" width="4.17" height="0.75" fill="#555" opacity="0.39"/><rect x="24.55" y="29.35" width="4.04" height="0.75" fill="#555" opacity="0.26"/><rect x="29.29" y="29.35" width="3.36" height="0.75" fill="#555" opacity="0.36"/><rect x="33.35" y="29.35" width="5.03" height="0.75" fill="#555" opacity="0.35"/><rect x="39.08" y="29.35" width="4.76" height="0.75" fill="#555" opacity="0.26"/><rect x="44.55" y="29.35" width="3.45" height="0.75" fill="#555" opacity="0.36"/><rect x="15.00" y="30.90" width="1.90" height="0.75" fill="#555" opacity="0.47"/><rect x="17.60" y="30.90" width="4.57" height="0.75" fill="#555" opacity="0.36"/><rect x="22.87" y="30.90" width="4.48" height="0.75" fill="#555" opacity="0.43"/><rect x="28.05" y="30.90" width="2.27" height="0.75" fill="#555" opacity="0.47"/><rect x="31.01" y="30.90" width="2.05" height="0.75" fill="#555" opacity="0.43"/><rect x="33.76" y="30.90" width="3.24" height="0.75" fill="#555" opacity="0.37"/><rect x="37.70" y="30.90" width="3.76" height="0.75" fill="#555" opacity="0.41"/><rect x="42.17" y="30.90" width="2.32" height="0.75" fill="#555" opacity="0.49"/><rect x="45.19" y="30.90" width="1.79" height="0.75" fill="#555" opacity="0.33"/><rect x="15.00" y="32.45" width="4.52" height="0.75" fill="#555" opacity="0.38"/><rect x="20.22" y="32.45" width="4.20" height="0.75" fill="#555" opacity="0.36"/><rect x="25.12" y="32.45" width="2.57" height="0.75" fill="#555" opacity="0.38"/><rect x="28.39" y="32.45" width="1.61" height="0.75" fill="#555" opacity="0.32"/><rect x="30.70" y="32.45" width="4.52" height="0.75" fill="#555" opacity="0.33"/><rect x="35.91" y="32.45" width="4.50" height="0.75" fill="#555" opacity="0.43"/><rect x="41.11" y="32.45" width="3.12" height="0.75" fill="#555" opacity="0.41"/><rect x="44.93" y="32.45" width="3.07" height="0.75" fill="#555" opacity="0.44"/><rect x="17.64" y="34.00" width="2.68" height="0.75" fill="#555" opacity="0.28"/><rect x="21.02" y="34.00" width="3.73" height="0.75" fill="#555" opacity="0.43"/><rect x="25.45" y="34.00" width="2.97" height="0.75" fill="#555" opacity="0.36"/><rect x="29.11" y="34.00" width="3.03" height="0.75" fill="#555" opacity="0.35"/><rect x="32.84" y="34.00" width="0.99" height="0.75" fill="#555" opacity="0.33"/><rect x="15.00" y="35.55" width="5.16" height="0.75" fill="#555" opacity="0.30"/><rect x="20.86" y="35.55" width="4.80" height="0.75" fill="#555" opacity="0.34"/><rect x="26.36" y="35.55" width="4.09" height="0.75" fill="#555" opacity="0.41"/><rect x="31.14" y="35.55" width="4.11" height="0.75" fill="#555" opacity="0.35"/><rect x="35.96" y="35.55" width="4.86" height="0.75" fill="#555" opacity="0.31"/><rect x="41.52" y="35.55" width="4.03" height="0.75" fill="#555" opacity="0.35"/><rect x="46.25" y="35.55" width="1.75" height="0.75" fill="#555" opacity="0.42"/><rect x="15.00" y="37.10" width="2.43" height="0.75" fill="#555" opacity="0.33"/><rect x="18.13" y="37.10" width="2.43" height="0.75" fill="#555" opacity="0.31"/><rect x="21.26" y="37.10" width="5.33" height="0.75" fill="#555" opacity="0.28"/><rect x="27.29" y="37.10" width="4.77" height="0.75" fill="#555" opacity="0.32"/><rect x="32.77" y="37.10" width="2.96" height="0.75" fill="#555" opacity="0.31"/><rect x="36.42" y="37.10" width="1.81" height="0.75" fill="#555" opacity="0.33"/><rect x="38.93" y="37.10" width="2.17" height="0.75" fill="#555" opacity="0.33"/><rect x="41.80" y="37.10" width="2.67" height="0.75" fill="#555" opacity="0.40"/><rect x="45.17" y="37.10" width="2.83" height="0.75" fill="#555" opacity="0.33"/><rect x="15.00" y="38.65" width="1.90" height="0.75" fill="#555" opacity="0.30"/><rect x="17.60" y="38.65" width="2.26" height="0.75" fill="#555" opacity="0.37"/><rect x="20.56" y="38.65" width="3.00" height="0.75" fill="#555" opacity="0.32"/><rect x="24.25" y="38.65" width="4.68" height="0.75" fill="#555" opacity="0.30"/><rect x="29.63" y="38.65" width="4.73" height="0.75" fill="#555" opacity="0.36"/><rect x="35.07" y="38.65" width="3.10" height="0.75" fill="#555" opacity="0.39"/><rect x="38.87" y="38.65" width="2.87" height="0.75" fill="#555" opacity="0.40"/><rect x="42.44" y="38.65" width="5.20" height="0.75" fill="#555" opacity="0.34"/><rect x="15.00" y="40.20" width="4.50" height="0.75" fill="#555" opacity="0.46"/><rect x="20.20" y="40.20" width="5.24" height="0.75" fill="#555" opacity="0.44"/><rect x="26.15" y="40.20" width="5.42" height="0.75" fill="#555" opacity="0.36"/><rect x="32.26" y="40.20" width="3.99" height="0.75" fill="#555" opacity="0.42"/><rect x="36.95" y="40.20" width="2.97" height="0.75" fill="#555" opacity="0.38"/><rect x="40.62" y="40.20" width="2.20" height="0.75" fill="#555" opacity="0.47"/><rect x="43.52" y="40.20" width="2.92" height="0.75" fill="#555" opacity="0.39"/><rect x="47.14" y="40.20" width="0.86" height="0.75" fill="#555" opacity="0.34"/><rect x="15.00" y="41.75" width="2.94" height="0.75" fill="#555" opacity="0.40"/><rect x="18.64" y="41.75" width="5.03" height="0.75" fill="#555" opacity="0.38"/><rect x="24.37" y="41.75" width="0.99" height="0.75" fill="#555" opacity="0.35"/><rect x="15.00" y="43.30" width="2.64" height="0.75" fill="#555" opacity="0.37"/><rect x="18.34" y="43.30" width="2.10" height="0.75" fill="#555" opacity="0.32"/><rect x="21.14" y="43.30" width="5.20" height="0.75" fill="#555" opacity="0.29"/><rect x="27.05" y="43.30" width="2.07" height="0.75" fill="#555" opacity="0.31"/><rect x="29.81" y="43.30" width="2.50" height="0.75" fill="#555" opacity="0.34"/><rect x="33.02" y="43.30" width="2.50" height="0.75" fill="#555" opacity="0.33"/><rect x="36.22" y="43.30" width="2.49" height="0.75" fill="#555" opacity="0.31"/><rect x="39.40" y="43.30" width="3.94" height="0.75" fill="#555" opacity="0.33"/><rect x="44.05" y="43.30" width="2.99" height="0.75" fill="#555" opacity="0.39"/><rect x="17.64" y="44.85" width="4.62" height="0.75" fill="#555" opacity="0.30"/><rect x="22.96" y="44.85" width="3.59" height="0.75" fill="#555" opacity="0.41"/><rect x="27.25" y="44.85" width="2.85" height="0.75" fill="#555" opacity="0.39"/><rect x="30.80" y="44.85" width="3.94" height="0.75" fill="#555" opacity="0.34"/><rect x="35.44" y="44.85" width="5.49" height="0.75" fill="#555" opacity="0.34"/><rect x="15.00" y="46.40" width="4.85" height="0.75" fill="#555" opacity="0.35"/><rect x="20.55" y="46.40" width="3.85" height="0.75" fill="#555" opacity="0.35"/><rect x="25.10" y="46.40" width="5.44" height="0.75" fill="#555" opacity="0.41"/><rect x="31.24" y="46.40" width="4.86" height="0.75" fill="#555" opacity="0.33"/><rect x="36.81" y="46.40" width="3.15" height="0.75" fill="#555" opacity="0.34"/><rect x="40.65" y="46.40" width="1.68" height="0.75" fill="#555" opacity="0.28"/><rect x="43.04" y="46.40" width="4.96" height="0.75" fill="#555" opacity="0.29"/><rect x="15.00" y="47.95" width="1.81" height="0.75" fill="#555" opacity="0.38"/><rect x="17.51" y="47.95" width="4.69" height="0.75" fill="#555" opacity="0.33"/><rect x="22.90" y="47.95" width="1.92" height="0.75" fill="#555" opacity="0.39"/><rect x="25.52" y="47.95" width="2.19" height="0.75" fill="#555" opacity="0.35"/><rect x="28.42" y="47.95" width="4.18" height="0.75" fill="#555" opacity="0.35"/><rect x="33.30" y="47.95" width="5.39" height="0.75" fill="#555" opacity="0.44"/><rect x="39.38" y="47.95" width="1.70" height="0.75" fill="#555" opacity="0.49"/><rect x="41.78" y="47.95" width="2.47" height="0.75" fill="#555" opacity="0.41"/><rect x="44.95" y="47.95" width="3.05" height="0.75" fill="#555" opacity="0.35"/><rect x="15.00" y="37.00" width="2.98" height="0.6" fill="#6aa0d8" opacity="0.43"/><rect x="18.68" y="37.00" width="4.00" height="0.6" fill="#6aa0d8" opacity="0.34"/><rect x="23.38" y="37.00" width="1.55" height="0.6" fill="#6aa0d8" opacity="0.47"/><rect x="25.64" y="37.00" width="2.54" height="0.6" fill="#6aa0d8" opacity="0.36"/><rect x="28.87" y="37.00" width="5.48" height="0.6" fill="#6aa0d8" opacity="0.40"/><rect x="35.06" y="37.00" width="4.85" height="0.6" fill="#6aa0d8" opacity="0.41"/><rect x="40.60" y="37.00" width="4.06" height="0.6" fill="#6aa0d8" opacity="0.35"/><rect x="45.36" y="37.00" width="2.64" height="0.6" fill="#6aa0d8" opacity="0.47"/><rect x="15.00" y="38.55" width="4.19" height="0.6" fill="#6aa0d8" opacity="0.36"/><rect x="19.89" y="38.55" width="4.53" height="0.6" fill="#6aa0d8" opacity="0.45"/><rect x="25.12" y="38.55" width="2.71" height="0.6" fill="#6aa0d8" opacity="0.35"/><rect x="28.52" y="38.55" width="4.96" height="0.6" fill="#6aa0d8" opacity="0.43"/><rect x="34.19" y="38.55" width="4.38" height="0.6" fill="#6aa0d8" opacity="0.51"/><rect x="39.26" y="38.55" width="4.36" height="0.6" fill="#6aa0d8" opacity="0.52"/><rect x="44.32" y="38.55" width="3.08" height="0.6" fill="#6aa0d8" opacity="0.49"/><rect x="15.00" y="40.10" width="5.02" height="0.6" fill="#6aa0d8" opacity="0.39"/><rect x="20.72" y="40.10" width="2.04" height="0.6" fill="#6aa0d8" opacity="0.41"/><rect x="23.46" y="40.10" width="5.36" height="0.6" fill="#6aa0d8" opacity="0.45"/><rect x="29.52" y="40.10" width="4.01" height="0.6" fill="#6aa0d8" opacity="0.43"/><rect x="34.23" y="40.10" width="3.53" height="0.6" fill="#6aa0d8" opacity="0.44"/><rect x="38.46" y="40.10" width="2.90" height="0.6" fill="#6aa0d8" opacity="0.48"/><rect x="42.06" y="40.10" width="3.84" height="0.6" fill="#6aa0d8" opacity="0.55"/><rect x="46.60" y="40.10" width="1.40" height="0.6" fill="#6aa0d8" opacity="0.55"/><rect x="15.00" y="41.65" width="4.19" height="0.6" fill="#6aa0d8" opacity="0.41"/><rect x="19.89" y="41.65" width="4.94" height="0.6" fill="#6aa0d8" opacity="0.57"/><rect x="25.53" y="41.65" width="5.12" height="0.6" fill="#6aa0d8" opacity="0.49"/><rect x="31.35" y="41.65" width="4.36" height="0.6" fill="#6aa0d8" opacity="0.42"/><rect x="36.40" y="41.65" width="4.83" height="0.6" fill="#6aa0d8" opacity="0.49"/><rect x="41.93" y="41.65" width="2.64" height="0.6" fill="#6aa0d8" opacity="0.39"/><rect x="45.27" y="41.65" width="2.73" height="0.6" fill="#6aa0d8" opacity="0.57"/><rect x="15.00" y="43.20" width="2.10" height="0.6" fill="#6aa0d8" opacity="0.36"/><rect x="17.80" y="43.20" width="4.58" height="0.6" fill="#6aa0d8" opacity="0.45"/><rect x="23.08" y="43.20" width="1.68" height="0.6" fill="#6aa0d8" opacity="0.41"/><rect x="25.45" y="43.20" width="1.68" height="0.6" fill="#6aa0d8" opacity="0.43"/><rect x="27.83" y="43.20" width="2.82" height="0.6" fill="#6aa0d8" opacity="0.45"/><rect x="31.36" y="43.20" width="5.42" height="0.6" fill="#6aa0d8" opacity="0.39"/><rect x="37.48" y="43.20" width="0.63" height="0.6" fill="#6aa0d8" opacity="0.36"/><rect x="15.00" y="44.75" width="2.29" height="0.6" fill="#6aa0d8" opacity="0.32"/><rect x="17.99" y="44.75" width="3.94" height="0.6" fill="#6aa0d8" opacity="0.29"/><rect x="22.63" y="44.75" width="1.67" height="0.6" fill="#6aa0d8" opacity="0.39"/><rect x="25.00" y="44.75" width="2.76" height="0.6" fill="#6aa0d8" opacity="0.40"/><rect x="28.46" y="44.75" width="5.09" height="0.6" fill="#6aa0d8" opacity="0.32"/><rect x="34.24" y="44.75" width="0.55" height="0.6" fill="#6aa0d8" opacity="0.34"/><rect x="15.00" y="46.30" width="3.74" height="0.6" fill="#6aa0d8" opacity="0.44"/><rect x="19.44" y="46.30" width="5.26" height="0.6" fill="#6aa0d8" opacity="0.42"/><rect x="25.40" y="46.30" width="3.22" height="0.6" fill="#6aa0d8" opacity="0.46"/><rect x="29.32" y="46.30" width="2.45" height="0.6" fill="#6aa0d8" opacity="0.38"/><rect x="32.47" y="46.30" width="5.41" height="0.6" fill="#6aa0d8" opacity="0.42"/><rect x="38.59" y="46.30" width="3.69" height="0.6" fill="#6aa0d8" opacity="0.33"/><rect x="42.98" y="46.30" width="3.16" height="0.6" fill="#6aa0d8" opacity="0.43"/><rect x="46.84" y="46.30" width="1.16" height="0.6" fill="#6aa0d8" opacity="0.44"/></svg></div>
<div class="thumb" style="top:333px"><svg style="left:0;top:0" width="69" height="52" fill="none"><rect x="17.00" y="2.00" width="3.08" height="0.7" fill="#555" opacity="0.25"/><rect x="20.78" y="2.00" width="1.77" height="0.7" fill="#555" opacity="0.28"/><rect x="23.25" y="2.00" width="5.17" height="0.7" fill="#555" opacity="0.33"/><rect x="29.12" y="2.00" width="4.56" height="0.7" fill="#555" opacity="0.26"/><rect x="34.38" y="2.00" width="3.65" height="0.7" fill="#555" opacity="0.26"/><rect x="38.73" y="2.00" width="2.19" height="0.7" fill="#555" opacity="0.24"/><rect x="41.62" y="2.00" width="2.36" height="0.7" fill="#555" opacity="0.34"/><rect x="44.68" y="2.00" width="4.82" height="0.7" fill="#555" opacity="0.33"/><rect x="50.19" y="2.00" width="0.81" height="0.7" fill="#555" opacity="0.25"/><rect x="17.00" y="3.30" width="4.43" height="0.7" fill="#555" opacity="0.41"/><rect x="22.13" y="3.30" width="5.02" height="0.7" fill="#555" opacity="0.29"/><rect x="27.85" y="3.30" width="3.92" height="0.7" fill="#555" opacity="0.38"/><rect x="32.47" y="3.30" width="3.52" height="0.7" fill="#555" opacity="0.31"/><rect x="36.70" y="3.30" width="3.39" height="0.7" fill="#555" opacity="0.29"/><rect x="40.79" y="3.30" width="5.24" height="0.7" fill="#555" opacity="0.41"/><rect x="46.73" y="3.30" width="3.69" height="0.7" fill="#555" opacity="0.32"/><rect x="17.00" y="4.60" width="5.03" height="0.7" fill="#555" opacity="0.40"/><rect x="22.73" y="4.60" width="3.53" height="0.7" fill="#555" opacity="0.34"/><rect x="26.96" y="4.60" width="3.90" height="0.7" fill="#555" opacity="0.34"/><rect x="31.56" y="4.60" width="2.15" height="0.7" fill="#555" opacity="0.32"/><rect x="34.40" y="4.60" width="4.75" height="0.7" fill="#555" opacity="0.28"/><rect x="39.85" y="4.60" width="1.69" height="0.7" fill="#555" opacity="0.37"/><rect x="42.24" y="4.60" width="2.62" height="0.7" fill="#555" opacity="0.35"/><rect x="45.56" y="4.60" width="3.38" height="0.7" fill="#555" opacity="0.32"/><rect x="49.65" y="4.60" width="1.35" height="0.7" fill="#555" opacity="0.30"/><rect x="17.00" y="5.90" width="4.03" height="0.7" fill="#555" opacity="0.27"/><rect x="21.73" y="5.90" width="2.92" height="0.7" fill="#555" opacity="0.34"/><rect x="25.35" y="5.90" width="2.78" height="0.7" fill="#555" opacity="0.31"/><rect x="28.84" y="5.90" width="5.12" height="0.7" fill="#555" opacity="0.25"/><rect x="34.65" y="5.90" width="1.75" height="0.7" fill="#555" opacity="0.27"/><rect x="37.10" y="5.90" width="4.56" height="0.7" fill="#555" opacity="0.32"/><rect x="42.36" y="5.90" width="2.45" height="0.7" fill="#555" opacity="0.28"/><rect x="45.51" y="5.90" width="2.21" height="0.7" fill="#555" opacity="0.30"/><rect x="48.42" y="5.90" width="1.67" height="0.7" fill="#555" opacity="0.33"/><path d="M16 7.5 V22.5" stroke="#999" stroke-width="0.35"/><path d="M25 7.5 V22.5" stroke="#999" stroke-width="0.35"/><path d="M35 7.5 V22.5" stroke="#999" stroke-width="0.35"/><path d="M44 7.5 V22.5" stroke="#999" stroke-width="0.35"/><path d="M53 7.5 V22.5" stroke="#999" stroke-width="0.35"/><path d="M16 7.5 H53" stroke="#999" stroke-width="0.35"/><path d="M16 10 H53" stroke="#999" stroke-width="0.35"/><path d="M16 13 H53" stroke="#999" stroke-width="0.35"/><path d="M16 16 H53" stroke="#999" stroke-width="0.35"/><path d="M16 19 H53" stroke="#999" stroke-width="0.35"/><path d="M16 22.5 H53" stroke="#999" stroke-width="0.35"/><rect x="17.00" y="9.00" width="4.68" height="0.6" fill="#666" opacity="0.37"/><rect x="22.38" y="9.00" width="0.62" height="0.6" fill="#666" opacity="0.37"/><rect x="17.00" y="10.40" width="3.20" height="0.6" fill="#666" opacity="0.39"/><rect x="17.00" y="11.80" width="3.21" height="0.6" fill="#666" opacity="0.27"/><rect x="17.00" y="13.20" width="2.45" height="0.6" fill="#666" opacity="0.30"/><rect x="17.00" y="14.60" width="3.97" height="0.6" fill="#666" opacity="0.21"/><rect x="17.00" y="16.00" width="2.36" height="0.6" fill="#666" opacity="0.31"/><rect x="20.06" y="16.00" width="1.35" height="0.6" fill="#666" opacity="0.24"/><rect x="17.00" y="17.40" width="4.21" height="0.6" fill="#666" opacity="0.26"/><rect x="21.91" y="17.40" width="1.09" height="0.6" fill="#666" opacity="0.32"/><rect x="17.00" y="18.80" width="2.70" height="0.6" fill="#666" opacity="0.31"/><rect x="20.40" y="18.80" width="2.16" height="0.6" fill="#666" opacity="0.28"/><rect x="17.00" y="20.20" width="1.51" height="0.6" fill="#666" opacity="0.32"/><rect x="16.00" y="23.00" width="3.44" height="0.7" fill="#555" opacity="0.34"/><rect x="20.14" y="23.00" width="1.50" height="0.7" fill="#555" opacity="0.40"/><rect x="22.34" y="23.00" width="3.38" height="0.7" fill="#555" opacity="0.42"/><rect x="26.42" y="23.00" width="2.99" height="0.7" fill="#555" opacity="0.42"/><rect x="30.12" y="23.00" width="2.59" height="0.7" fill="#555" opacity="0.43"/><rect x="33.41" y="23.00" width="4.42" height="0.7" fill="#555" opacity="0.36"/><rect x="38.53" y="23.00" width="3.65" height="0.7" fill="#555" opacity="0.41"/><rect x="42.88" y="23.00" width="2.27" height="0.7" fill="#555" opacity="0.39"/><rect x="45.85" y="23.00" width="4.72" height="0.7" fill="#555" opacity="0.34"/><rect x="51.27" y="23.00" width="1.73" height="0.7" fill="#555" opacity="0.41"/><rect x="16.00" y="24.40" width="1.87" height="0.7" fill="#555" opacity="0.36"/><rect x="18.57" y="24.40" width="4.72" height="0.7" fill="#555" opacity="0.31"/><rect x="23.99" y="24.40" width="1.88" height="0.7" fill="#555" opacity="0.28"/><rect x="26.57" y="24.40" width="4.04" height="0.7" fill="#555" opacity="0.29"/><rect x="31.31" y="24.40" width="5.31" height="0.7" fill="#555" opacity="0.33"/><rect x="37.31" y="24.40" width="2.30" height="0.7" fill="#555" opacity="0.34"/><rect x="40.32" y="24.40" width="2.94" height="0.7" fill="#555" opacity="0.38"/><rect x="43.96" y="24.40" width="5.14" height="0.7" fill="#555" opacity="0.32"/><rect x="49.80" y="24.40" width="3.20" height="0.7" fill="#555" opacity="0.35"/><rect x="16.00" y="25.80" width="1.61" height="0.7" fill="#555" opacity="0.37"/><rect x="18.31" y="25.80" width="3.91" height="0.7" fill="#555" opacity="0.36"/><rect x="22.92" y="25.80" width="3.86" height="0.7" fill="#555" opacity="0.33"/><rect x="27.48" y="25.80" width="5.02" height="0.7" fill="#555" opacity="0.40"/><rect x="33.20" y="25.80" width="1.97" height="0.7" fill="#555" opacity="0.42"/><rect x="35.86" y="25.80" width="2.75" height="0.7" fill="#555" opacity="0.35"/><rect x="39.31" y="25.80" width="3.43" height="0.7" fill="#555" opacity="0.34"/><rect x="43.45" y="25.80" width="2.34" height="0.7" fill="#555" opacity="0.46"/><rect x="46.49" y="25.80" width="4.29" height="0.7" fill="#555" opacity="0.31"/><rect x="51.48" y="25.80" width="1.52" height="0.7" fill="#555" opacity="0.32"/><rect x="16.00" y="27.20" width="3.98" height="0.7" fill="#555" opacity="0.36"/><rect x="20.68" y="27.20" width="3.01" height="0.7" fill="#555" opacity="0.37"/><rect x="24.39" y="27.20" width="2.01" height="0.7" fill="#555" opacity="0.47"/><rect x="27.10" y="27.20" width="1.72" height="0.7" fill="#555" opacity="0.37"/><rect x="29.51" y="27.20" width="4.49" height="0.7" fill="#555" opacity="0.37"/><rect x="34.70" y="27.20" width="5.42" height="0.7" fill="#555" opacity="0.35"/><rect x="40.82" y="27.20" width="5.42" height="0.7" fill="#555" opacity="0.45"/><rect x="46.94" y="27.20" width="4.18" height="0.7" fill="#555" opacity="0.45"/><rect x="51.82" y="27.20" width="1.18" height="0.7" fill="#555" opacity="0.44"/><path d="M18 29 V51.5" stroke="#999" stroke-width="0.35"/><path d="M24 29 V51.5" stroke="#999" stroke-width="0.35"/><path d="M33 29 V51.5" stroke="#999" stroke-width="0.35"/><path d="M44 29 V51.5" stroke="#999" stroke-width="0.35"/><path d="M52 29 V51.5" stroke="#999" stroke-width="0.35"/><path d="M18 29 H52" stroke="#999" stroke-width="0.35"/><path d="M18 31.5 H52" stroke="#999" stroke-width="0.35"/><path d="M18 39 H52" stroke="#999" stroke-width="0.35"/><path d="M18 46 H52" stroke="#999" stroke-width="0.35"/><path d="M18 51.5 H52" stroke="#999" stroke-width="0.35"/><rect x="25.00" y="32.00" width="4.10" height="0.6" fill="#666" opacity="0.19"/><rect x="29.80" y="32.00" width="2.20" height="0.6" fill="#666" opacity="0.22"/><rect x="25.00" y="33.50" width="3.23" height="0.6" fill="#666" opacity="0.18"/><rect x="25.00" y="35.00" width="2.00" height="0.6" fill="#666" opacity="0.26"/><rect x="27.70" y="35.00" width="0.89" height="0.6" fill="#666" opacity="0.35"/><rect x="25.00" y="36.50" width="5.41" height="0.6" fill="#666" opacity="0.21"/><rect x="31.11" y="36.50" width="0.89" height="0.6" fill="#666" opacity="0.23"/><rect x="25.00" y="38.00" width="2.51" height="0.6" fill="#666" opacity="0.22"/><rect x="25.00" y="39.50" width="2.99" height="0.6" fill="#666" opacity="0.29"/><rect x="28.69" y="39.50" width="1.75" height="0.6" fill="#666" opacity="0.23"/><rect x="31.14" y="39.50" width="0.86" height="0.6" fill="#666" opacity="0.30"/><rect x="25.00" y="41.00" width="3.84" height="0.6" fill="#666" opacity="0.24"/><rect x="29.54" y="41.00" width="2.46" height="0.6" fill="#666" opacity="0.28"/><rect x="25.00" y="42.50" width="3.80" height="0.6" fill="#666" opacity="0.24"/><rect x="29.50" y="42.50" width="2.50" height="0.6" fill="#666" opacity="0.27"/><rect x="25.00" y="44.00" width="1.97" height="0.6" fill="#666" opacity="0.30"/><rect x="27.67" y="44.00" width="4.33" height="0.6" fill="#666" opacity="0.27"/><rect x="25.00" y="45.50" width="4.17" height="0.6" fill="#666" opacity="0.25"/><rect x="29.87" y="45.50" width="2.13" height="0.6" fill="#666" opacity="0.26"/><rect x="25.00" y="47.00" width="3.88" height="0.6" fill="#666" opacity="0.29"/><rect x="29.58" y="47.00" width="2.42" height="0.6" fill="#666" opacity="0.33"/><rect x="25.00" y="48.50" width="4.16" height="0.6" fill="#666" opacity="0.22"/><rect x="29.86" y="48.50" width="2.14" height="0.6" fill="#666" opacity="0.28"/><rect x="25.00" y="50.00" width="2.64" height="0.6" fill="#666" opacity="0.28"/><rect x="28.34" y="50.00" width="3.66" height="0.6" fill="#666" opacity="0.24"/><rect x="34.00" y="32.00" width="2.01" height="0.6" fill="#666" opacity="0.34"/><rect x="36.71" y="32.00" width="1.84" height="0.6" fill="#666" opacity="0.28"/><rect x="39.25" y="32.00" width="4.75" height="0.6" fill="#666" opacity="0.27"/><rect x="34.00" y="33.50" width="3.31" height="0.6" fill="#666" opacity="0.26"/><rect x="38.01" y="33.50" width="2.27" height="0.6" fill="#666" opacity="0.30"/><rect x="40.98" y="33.50" width="1.86" height="0.6" fill="#666" opacity="0.23"/><rect x="34.00" y="35.00" width="4.33" height="0.6" fill="#666" opacity="0.24"/><rect x="34.00" y="36.50" width="1.75" height="0.6" fill="#666" opacity="0.33"/><rect x="36.45" y="36.50" width="1.84" height="0.6" fill="#666" opacity="0.33"/><rect x="34.00" y="38.00" width="3.49" height="0.6" fill="#666" opacity="0.30"/><rect x="38.19" y="38.00" width="5.11" height="0.6" fill="#666" opacity="0.29"/><rect x="34.00" y="39.50" width="3.32" height="0.6" fill="#666" opacity="0.27"/><rect x="34.00" y="41.00" width="4.42" height="0.6" fill="#666" opacity="0.32"/><rect x="39.12" y="41.00" width="2.64" height="0.6" fill="#666" opacity="0.26"/><rect x="42.46" y="41.00" width="1.54" height="0.6" fill="#666" opacity="0.23"/><rect x="34.00" y="42.50" width="4.26" height="0.6" fill="#666" opacity="0.25"/><rect x="38.96" y="42.50" width="5.04" height="0.6" fill="#666" opacity="0.26"/><rect x="34.00" y="44.00" width="2.10" height="0.6" fill="#666" opacity="0.24"/><rect x="36.80" y="44.00" width="3.54" height="0.6" fill="#666" opacity="0.20"/><rect x="41.04" y="44.00" width="2.96" height="0.6" fill="#666" opacity="0.24"/><rect x="34.00" y="45.50" width="2.48" height="0.6" fill="#666" opacity="0.19"/><rect x="37.18" y="45.50" width="2.87" height="0.6" fill="#666" opacity="0.22"/><rect x="40.75" y="45.50" width="3.19" height="0.6" fill="#666" opacity="0.23"/><rect x="34.00" y="47.00" width="2.20" height="0.6" fill="#666" opacity="0.29"/><rect x="36.90" y="47.00" width="2.16" height="0.6" fill="#666" opacity="0.32"/><rect x="39.77" y="47.00" width="4.23" height="0.6" fill="#666" opacity="0.27"/><rect x="34.00" y="48.50" width="1.55" height="0.6" fill="#666" opacity="0.28"/><rect x="36.25" y="48.50" width="2.87" height="0.6" fill="#666" opacity="0.21"/><rect x="39.82" y="48.50" width="3.24" height="0.6" fill="#666" opacity="0.22"/><rect x="34.00" y="50.00" width="3.17" height="0.6" fill="#666" opacity="0.27"/><rect x="37.87" y="50.00" width="2.65" height="0.6" fill="#666" opacity="0.22"/><rect x="41.23" y="50.00" width="1.84" height="0.6" fill="#666" opacity="0.22"/></svg></div>
<div class="thumb" style="top:397px"><svg style="left:0;top:0" width="69" height="52" fill="none"><rect x="11.00" y="2.00" width="4.97" height="0.7" fill="#555" opacity="0.23"/><rect x="16.67" y="2.00" width="3.51" height="0.7" fill="#555" opacity="0.35"/><rect x="20.88" y="2.00" width="1.82" height="0.7" fill="#555" opacity="0.30"/><rect x="23.40" y="2.00" width="3.97" height="0.7" fill="#555" opacity="0.24"/><rect x="28.07" y="2.00" width="3.02" height="0.7" fill="#555" opacity="0.32"/><rect x="31.78" y="2.00" width="3.31" height="0.7" fill="#555" opacity="0.32"/><rect x="35.79" y="2.00" width="2.13" height="0.7" fill="#555" opacity="0.26"/><rect x="38.62" y="2.00" width="1.94" height="0.7" fill="#555" opacity="0.30"/><rect x="41.26" y="2.00" width="5.20" height="0.7" fill="#555" opacity="0.31"/><rect x="47.16" y="2.00" width="4.60" height="0.7" fill="#555" opacity="0.28"/><rect x="52.46" y="2.00" width="3.54" height="0.7" fill="#555" opacity="0.25"/><rect x="11.00" y="3.40" width="3.19" height="0.7" fill="#555" opacity="0.30"/><rect x="14.89" y="3.40" width="2.57" height="0.7" fill="#555" opacity="0.32"/><rect x="18.15" y="3.40" width="2.62" height="0.7" fill="#555" opacity="0.41"/><rect x="21.48" y="3.40" width="2.30" height="0.7" fill="#555" opacity="0.43"/><rect x="24.48" y="3.40" width="5.02" height="0.7" fill="#555" opacity="0.30"/><rect x="30.19" y="3.40" width="3.02" height="0.7" fill="#555" opacity="0.36"/><rect x="33.91" y="3.40" width="1.59" height="0.7" fill="#555" opacity="0.35"/><rect x="36.20" y="3.40" width="5.13" height="0.7" fill="#555" opacity="0.31"/><rect x="42.03" y="3.40" width="3.89" height="0.7" fill="#555" opacity="0.31"/><rect x="46.62" y="3.40" width="3.81" height="0.7" fill="#555" opacity="0.43"/><rect x="51.13" y="3.40" width="2.31" height="0.7" fill="#555" opacity="0.29"/><rect x="54.14" y="3.40" width="1.83" height="0.7" fill="#555" opacity="0.37"/><rect x="14.60" y="4.80" width="3.18" height="0.7" fill="#555" opacity="0.37"/><rect x="18.48" y="4.80" width="4.05" height="0.7" fill="#555" opacity="0.32"/><rect x="23.24" y="4.80" width="3.82" height="0.7" fill="#555" opacity="0.34"/><rect x="27.75" y="4.80" width="3.94" height="0.7" fill="#555" opacity="0.46"/><rect x="32.39" y="4.80" width="1.72" height="0.7" fill="#555" opacity="0.40"/><rect x="34.81" y="4.80" width="3.93" height="0.7" fill="#555" opacity="0.33"/><rect x="11.00" y="6.20" width="1.99" height="0.7" fill="#555" opacity="0.43"/><rect x="13.69" y="6.20" width="5.30" height="0.7" fill="#555" opacity="0.35"/><rect x="19.69" y="6.20" width="3.94" height="0.7" fill="#555" opacity="0.32"/><rect x="24.33" y="6.20" width="2.96" height="0.7" fill="#555" opacity="0.43"/><rect x="28.00" y="6.20" width="3.86" height="0.7" fill="#555" opacity="0.44"/><rect x="32.56" y="6.20" width="1.85" height="0.7" fill="#555" opacity="0.37"/><rect x="35.11" y="6.20" width="4.96" height="0.7" fill="#555" opacity="0.41"/><rect x="40.76" y="6.20" width="3.31" height="0.7" fill="#555" opacity="0.38"/><rect x="44.77" y="6.20" width="5.44" height="0.7" fill="#555" opacity="0.41"/><rect x="50.91" y="6.20" width="1.57" height="0.7" fill="#555" opacity="0.45"/><rect x="53.18" y="6.20" width="2.81" height="0.7" fill="#555" opacity="0.39"/><rect x="11.00" y="7.60" width="1.86" height="0.7" fill="#555" opacity="0.34"/><rect x="13.56" y="7.60" width="1.91" height="0.7" fill="#555" opacity="0.36"/><rect x="16.17" y="7.60" width="1.60" height="0.7" fill="#555" opacity="0.36"/><rect x="18.47" y="7.60" width="4.73" height="0.7" fill="#555" opacity="0.32"/><rect x="23.90" y="7.60" width="4.34" height="0.7" fill="#555" opacity="0.28"/><rect x="28.94" y="7.60" width="4.45" height="0.7" fill="#555" opacity="0.31"/><rect x="34.09" y="7.60" width="2.42" height="0.7" fill="#555" opacity="0.38"/><rect x="37.21" y="7.60" width="3.10" height="0.7" fill="#555" opacity="0.30"/><rect x="41.01" y="7.60" width="4.94" height="0.7" fill="#555" opacity="0.30"/><rect x="46.65" y="7.60" width="4.17" height="0.7" fill="#555" opacity="0.27"/><rect x="51.52" y="7.60" width="4.48" height="0.7" fill="#555" opacity="0.29"/><rect x="14.60" y="9.00" width="5.29" height="0.7" fill="#555" opacity="0.36"/><rect x="20.59" y="9.00" width="3.93" height="0.7" fill="#555" opacity="0.24"/><rect x="25.21" y="9.00" width="1.74" height="0.7" fill="#555" opacity="0.26"/><rect x="27.66" y="9.00" width="3.06" height="0.7" fill="#555" opacity="0.31"/><rect x="31.41" y="9.00" width="5.37" height="0.7" fill="#555" opacity="0.28"/><rect x="37.48" y="9.00" width="2.06" height="0.7" fill="#555" opacity="0.31"/><rect x="40.24" y="9.00" width="2.05" height="0.7" fill="#555" opacity="0.25"/><rect x="42.99" y="9.00" width="3.72" height="0.7" fill="#555" opacity="0.32"/><rect x="47.41" y="9.00" width="1.76" height="0.7" fill="#555" opacity="0.29"/><rect x="49.88" y="9.00" width="4.32" height="0.7" fill="#555" opacity="0.33"/><rect x="54.89" y="9.00" width="1.11" height="0.7" fill="#555" opacity="0.35"/><rect x="11.00" y="10.40" width="5.02" height="0.7" fill="#555" opacity="0.37"/><rect x="16.72" y="10.40" width="1.90" height="0.7" fill="#555" opacity="0.30"/><rect x="19.32" y="10.40" width="3.62" height="0.7" fill="#555" opacity="0.32"/><rect x="23.63" y="10.40" width="4.02" height="0.7" fill="#555" opacity="0.31"/><rect x="28.35" y="10.40" width="4.62" height="0.7" fill="#555" opacity="0.33"/><rect x="33.67" y="10.40" width="1.55" height="0.7" fill="#555" opacity="0.32"/><rect x="35.92" y="10.40" width="3.33" height="0.7" fill="#555" opacity="0.38"/><rect x="39.95" y="10.40" width="3.05" height="0.7" fill="#555" opacity="0.32"/><rect x="43.70" y="10.40" width="3.43" height="0.7" fill="#555" opacity="0.44"/><rect x="47.83" y="10.40" width="3.64" height="0.7" fill="#555" opacity="0.44"/><rect x="52.17" y="10.40" width="1.62" height="0.7" fill="#555" opacity="0.45"/><rect x="54.49" y="10.40" width="1.51" height="0.7" fill="#555" opacity="0.38"/><rect x="11.00" y="11.80" width="1.76" height="0.7" fill="#555" opacity="0.41"/><rect x="13.46" y="11.80" width="3.67" height="0.7" fill="#555" opacity="0.36"/><rect x="17.83" y="11.80" width="4.40" height="0.7" fill="#555" opacity="0.42"/><rect x="22.93" y="11.80" width="1.91" height="0.7" fill="#555" opacity="0.42"/><rect x="25.54" y="11.80" width="3.31" height="0.7" fill="#555" opacity="0.39"/><rect x="29.56" y="11.80" width="4.05" height="0.7" fill="#555" opacity="0.32"/><rect x="34.30" y="11.80" width="3.91" height="0.7" fill="#555" opacity="0.37"/><rect x="38.92" y="11.80" width="5.01" height="0.7" fill="#555" opacity="0.34"/><rect x="44.63" y="11.80" width="4.79" height="0.7" fill="#555" opacity="0.43"/><rect x="50.12" y="11.80" width="4.00" height="0.7" fill="#555" opacity="0.45"/><rect x="54.82" y="11.80" width="1.18" height="0.7" fill="#555" opacity="0.40"/><rect x="11.00" y="13.20" width="1.78" height="0.7" fill="#555" opacity="0.29"/><rect x="13.48" y="13.20" width="3.93" height="0.7" fill="#555" opacity="0.28"/><rect x="18.11" y="13.20" width="1.76" height="0.7" fill="#555" opacity="0.31"/><rect x="20.57" y="13.20" width="3.38" height="0.7" fill="#555" opacity="0.33"/><rect x="24.65" y="13.20" width="1.60" height="0.7" fill="#555" opacity="0.37"/><rect x="26.95" y="13.20" width="2.84" height="0.7" fill="#555" opacity="0.37"/><rect x="30.49" y="13.20" width="1.53" height="0.7" fill="#555" opacity="0.39"/><rect x="32.72" y="13.20" width="3.86" height="0.7" fill="#555" opacity="0.39"/><rect x="37.28" y="13.20" width="5.45" height="0.7" fill="#555" opacity="0.37"/><rect x="43.43" y="13.20" width="1.92" height="0.7" fill="#555" opacity="0.31"/><rect x="46.05" y="13.20" width="2.43" height="0.7" fill="#555" opacity="0.37"/><rect x="49.18" y="13.20" width="2.27" height="0.7" fill="#555" opacity="0.29"/><rect x="52.15" y="13.20" width="1.94" height="0.7" fill="#555" opacity="0.28"/><rect x="54.79" y="13.20" width="1.21" height="0.7" fill="#555" opacity="0.39"/><rect x="11.00" y="14.60" width="3.59" height="0.7" fill="#555" opacity="0.32"/><rect x="15.29" y="14.60" width="4.04" height="0.7" fill="#555" opacity="0.30"/><rect x="20.03" y="14.60" width="2.53" height="0.7" fill="#555" opacity="0.34"/><rect x="23.25" y="14.60" width="2.29" height="0.7" fill="#555" opacity="0.33"/><rect x="26.24" y="14.60" width="5.28" height="0.7" fill="#555" opacity="0.27"/><rect x="32.22" y="14.60" width="1.91" height="0.7" fill="#555" opacity="0.38"/><rect x="34.83" y="14.60" width="1.73" height="0.7" fill="#555" opacity="0.30"/><rect x="37.26" y="14.60" width="4.91" height="0.7" fill="#555" opacity="0.35"/><rect x="42.87" y="14.60" width="2.38" height="0.7" fill="#555" opacity="0.27"/><rect x="45.95" y="14.60" width="2.60" height="0.7" fill="#555" opacity="0.31"/><rect x="49.25" y="14.60" width="4.70" height="0.7" fill="#555" opacity="0.40"/><rect x="54.65" y="14.60" width="1.35" height="0.7" fill="#555" opacity="0.39"/><path d="M11 17 V29.5" stroke="#999" stroke-width="0.35"/><path d="M25 17 V29.5" stroke="#999" stroke-width="0.35"/><path d="M36 17 V29.5" stroke="#999" stroke-width="0.35"/><path d="M44 17 V29.5" stroke="#999" stroke-width="0.35"/><path d="M50 17 V29.5" stroke="#999" stroke-width="0.35"/><path d="M56 17 V29.5" stroke="#999" stroke-width="0.35"/><path d="M11 17 H56" stroke="#999" stroke-width="0.35"/><path d="M11 19.5 H56" stroke="#999" stroke-width="0.35"/><path d="M11 22 H56" stroke="#999" stroke-width="0.35"/><path d="M11 24.5 H56" stroke="#999" stroke-width="0.35"/><path d="M11 27 H56" stroke="#999" stroke-width="0.35"/><path d="M11 29.5 H56" stroke="#999" stroke-width="0.35"/><rect x="12.00" y="18.00" width="3.81" height="0.6" fill="#555" opacity="0.25"/><rect x="16.51" y="18.00" width="4.75" height="0.6" fill="#555" opacity="0.32"/><rect x="21.97" y="18.00" width="2.03" height="0.6" fill="#555" opacity="0.24"/><rect x="12.00" y="19.30" width="2.50" height="0.6" fill="#555" opacity="0.33"/><rect x="15.20" y="19.30" width="5.49" height="0.6" fill="#555" opacity="0.22"/><rect x="21.39" y="19.30" width="2.61" height="0.6" fill="#555" opacity="0.28"/><rect x="12.00" y="20.60" width="4.20" height="0.6" fill="#555" opacity="0.26"/><rect x="16.90" y="20.60" width="4.24" height="0.6" fill="#555" opacity="0.29"/><rect x="21.84" y="20.60" width="2.03" height="0.6" fill="#555" opacity="0.30"/><rect x="12.00" y="21.90" width="3.95" height="0.6" fill="#555" opacity="0.27"/><rect x="16.65" y="21.90" width="1.52" height="0.6" fill="#555" opacity="0.29"/><rect x="18.87" y="21.90" width="5.13" height="0.6" fill="#555" opacity="0.31"/><rect x="12.00" y="23.20" width="2.76" height="0.6" fill="#555" opacity="0.34"/><rect x="15.46" y="23.20" width="3.24" height="0.6" fill="#555" opacity="0.27"/><rect x="19.40" y="23.20" width="3.84" height="0.6" fill="#555" opacity="0.38"/><rect x="12.00" y="24.50" width="1.65" height="0.6" fill="#555" opacity="0.28"/><rect x="14.35" y="24.50" width="2.60" height="0.6" fill="#555" opacity="0.30"/><rect x="12.00" y="25.80" width="2.10" height="0.6" fill="#555" opacity="0.34"/><rect x="14.80" y="25.80" width="3.00" height="0.6" fill="#555" opacity="0.34"/><rect x="18.50" y="25.80" width="1.95" height="0.6" fill="#555" opacity="0.37"/><rect x="21.15" y="25.80" width="1.89" height="0.6" fill="#555" opacity="0.28"/><rect x="12.00" y="27.10" width="3.23" height="0.6" fill="#555" opacity="0.32"/><rect x="15.93" y="27.10" width="2.48" height="0.6" fill="#555" opacity="0.30"/><rect x="19.11" y="27.10" width="3.97" height="0.6" fill="#555" opacity="0.29"/><rect x="11.00" y="31.00" width="5.20" height="0.7" fill="#555" opacity="0.34"/><rect x="16.90" y="31.00" width="3.53" height="0.7" fill="#555" opacity="0.36"/><rect x="21.13" y="31.00" width="2.24" height="0.7" fill="#555" opacity="0.35"/><rect x="24.07" y="31.00" width="4.02" height="0.7" fill="#555" opacity="0.39"/><rect x="28.79" y="31.00" width="1.88" height="0.7" fill="#555" opacity="0.32"/><rect x="31.36" y="31.00" width="1.86" height="0.7" fill="#555" opacity="0.39"/><rect x="33.93" y="31.00" width="4.27" height="0.7" fill="#555" opacity="0.28"/><rect x="38.90" y="31.00" width="5.43" height="0.7" fill="#555" opacity="0.41"/><rect x="45.03" y="31.00" width="4.12" height="0.7" fill="#555" opacity="0.36"/><rect x="49.84" y="31.00" width="2.13" height="0.7" fill="#555" opacity="0.28"/><rect x="52.67" y="31.00" width="3.33" height="0.7" fill="#555" opacity="0.28"/><rect x="11.00" y="32.40" width="3.36" height="0.7" fill="#555" opacity="0.28"/><rect x="15.06" y="32.40" width="4.87" height="0.7" fill="#555" opacity="0.29"/><rect x="20.63" y="32.40" width="4.06" height="0.7" fill="#555" opacity="0.28"/><rect x="25.39" y="32.40" width="4.15" height="0.7" fill="#555" opacity="0.28"/><path d="M11 35.5 V51.5" stroke="#999" stroke-width="0.35"/><path d="M24 35.5 V51.5" stroke="#999" stroke-width="0.35"/><path d="M31 35.5 V51.5" stroke="#999" stroke-width="0.35"/><path d="M43 35.5 V51.5" stroke="#999" stroke-width="0.35"/><path d="M56 35.5 V51.5" stroke="#999" stroke-width="0.35"/><path d="M11 35.5 H56" stroke="#999" stroke-width="0.35"/><path d="M11 42 H56" stroke="#999" stroke-width="0.35"/><path d="M11 47.5 H56" stroke="#999" stroke-width="0.35"/><path d="M11 51.5 H56" stroke="#999" stroke-width="0.35"/><rect x="32.00" y="36.00" width="4.17" height="0.6" fill="#666" opacity="0.26"/><rect x="36.87" y="36.00" width="1.54" height="0.6" fill="#666" opacity="0.29"/><rect x="39.11" y="36.00" width="2.60" height="0.6" fill="#666" opacity="0.35"/><rect x="32.00" y="37.40" width="3.73" height="0.6" fill="#666" opacity="0.32"/><rect x="36.43" y="37.40" width="2.08" height="0.6" fill="#666" opacity="0.29"/><rect x="39.21" y="37.40" width="2.15" height="0.6" fill="#666" opacity="0.35"/><rect x="32.00" y="38.80" width="4.25" height="0.6" fill="#666" opacity="0.23"/><rect x="36.95" y="38.80" width="2.15" height="0.6" fill="#666" opacity="0.28"/><rect x="32.00" y="40.20" width="3.30" height="0.6" fill="#666" opacity="0.28"/><rect x="32.00" y="41.60" width="1.95" height="0.6" fill="#666" opacity="0.33"/><rect x="34.65" y="41.60" width="2.04" height="0.6" fill="#666" opacity="0.31"/><rect x="37.39" y="41.60" width="3.99" height="0.6" fill="#666" opacity="0.29"/><rect x="32.00" y="43.00" width="2.18" height="0.6" fill="#666" opacity="0.28"/><rect x="34.88" y="43.00" width="3.10" height="0.6" fill="#666" opacity="0.24"/><rect x="38.69" y="43.00" width="3.31" height="0.6" fill="#666" opacity="0.24"/><rect x="32.00" y="44.40" width="4.41" height="0.6" fill="#666" opacity="0.29"/><rect x="37.11" y="44.40" width="4.89" height="0.6" fill="#666" opacity="0.26"/><rect x="32.00" y="45.80" width="4.26" height="0.6" fill="#666" opacity="0.30"/><rect x="36.96" y="45.80" width="1.96" height="0.6" fill="#666" opacity="0.25"/><rect x="39.62" y="45.80" width="2.38" height="0.6" fill="#666" opacity="0.28"/><rect x="32.00" y="47.20" width="1.61" height="0.6" fill="#666" opacity="0.33"/><rect x="34.31" y="47.20" width="3.22" height="0.6" fill="#666" opacity="0.29"/><rect x="38.23" y="47.20" width="2.39" height="0.6" fill="#666" opacity="0.28"/><rect x="41.32" y="47.20" width="0.68" height="0.6" fill="#666" opacity="0.32"/><rect x="32.00" y="48.60" width="4.28" height="0.6" fill="#666" opacity="0.21"/><rect x="36.98" y="48.60" width="0.77" height="0.6" fill="#666" opacity="0.24"/><rect x="32.00" y="50.00" width="3.34" height="0.6" fill="#666" opacity="0.21"/><rect x="36.04" y="50.00" width="2.63" height="0.6" fill="#666" opacity="0.24"/><rect x="39.36" y="50.00" width="2.64" height="0.6" fill="#666" opacity="0.24"/><rect x="13.00" y="36.00" width="4.24" height="0.6" fill="#666" opacity="0.33"/><rect x="17.94" y="36.00" width="2.24" height="0.6" fill="#666" opacity="0.25"/><rect x="20.88" y="36.00" width="2.09" height="0.6" fill="#666" opacity="0.25"/><rect x="13.00" y="38.20" width="3.63" height="0.6" fill="#666" opacity="0.20"/><rect x="17.33" y="38.20" width="2.68" height="0.6" fill="#666" opacity="0.23"/><rect x="20.70" y="38.20" width="2.30" height="0.6" fill="#666" opacity="0.24"/><rect x="13.00" y="40.40" width="4.38" height="0.6" fill="#666" opacity="0.26"/><rect x="13.00" y="42.60" width="4.48" height="0.6" fill="#666" opacity="0.35"/><rect x="18.18" y="42.60" width="4.68" height="0.6" fill="#666" opacity="0.27"/><rect x="13.00" y="44.80" width="4.52" height="0.6" fill="#666" opacity="0.27"/><rect x="18.22" y="44.80" width="3.22" height="0.6" fill="#666" opacity="0.25"/><rect x="22.14" y="44.80" width="0.86" height="0.6" fill="#666" opacity="0.24"/><rect x="13.00" y="47.00" width="5.44" height="0.6" fill="#666" opacity="0.32"/><rect x="19.14" y="47.00" width="0.96" height="0.6" fill="#666" opacity="0.33"/><rect x="13.00" y="49.20" width="2.21" height="0.6" fill="#666" opacity="0.23"/><rect x="15.91" y="49.20" width="3.48" height="0.6" fill="#666" opacity="0.23"/></svg></div>
<div class="thumb" style="top:460px;height:50px"><svg style="left:0;top:0" width="69" height="52" fill="none"><rect x="2.00" y="3.00" width="5.26" height="0.6" fill="#555" opacity="0.28"/><rect x="7.96" y="3.00" width="2.52" height="0.6" fill="#555" opacity="0.34"/><rect x="11.18" y="3.00" width="4.13" height="0.6" fill="#555" opacity="0.28"/><rect x="16.02" y="3.00" width="4.24" height="0.6" fill="#555" opacity="0.29"/><rect x="20.96" y="3.00" width="0.58" height="0.6" fill="#555" opacity="0.26"/><rect x="2.00" y="4.40" width="2.93" height="0.6" fill="#555" opacity="0.30"/><rect x="5.63" y="4.40" width="4.72" height="0.6" fill="#555" opacity="0.35"/><rect x="11.05" y="4.40" width="2.10" height="0.6" fill="#555" opacity="0.34"/><rect x="13.85" y="4.40" width="4.16" height="0.6" fill="#555" opacity="0.29"/><rect x="18.70" y="4.40" width="4.11" height="0.6" fill="#555" opacity="0.28"/><rect x="23.51" y="4.40" width="2.85" height="0.6" fill="#555" opacity="0.27"/><rect x="27.06" y="4.40" width="2.32" height="0.6" fill="#555" opacity="0.40"/><rect x="30.08" y="4.40" width="1.92" height="0.6" fill="#555" opacity="0.40"/><rect x="2.00" y="5.80" width="4.99" height="0.6" fill="#555" opacity="0.33"/><rect x="7.69" y="5.80" width="1.95" height="0.6" fill="#555" opacity="0.31"/><rect x="10.34" y="5.80" width="4.03" height="0.6" fill="#555" opacity="0.26"/><rect x="15.07" y="5.80" width="1.88" height="0.6" fill="#555" opacity="0.35"/><rect x="17.65" y="5.80" width="3.56" height="0.6" fill="#555" opacity="0.26"/><rect x="21.91" y="5.80" width="3.31" height="0.6" fill="#555" opacity="0.27"/><rect x="25.92" y="5.80" width="4.69" height="0.6" fill="#555" opacity="0.30"/><rect x="31.31" y="5.80" width="0.69" height="0.6" fill="#555" opacity="0.34"/><rect x="2.00" y="7.20" width="4.46" height="0.6" fill="#555" opacity="0.20"/><rect x="7.16" y="7.20" width="3.60" height="0.6" fill="#555" opacity="0.20"/><rect x="11.46" y="7.20" width="3.42" height="0.6" fill="#555" opacity="0.26"/><path d="M2 10 V48" stroke="#aaa" stroke-width="0.35"/><path d="M11 10 V48" stroke="#aaa" stroke-width="0.35"/><path d="M23 10 V48" stroke="#aaa" stroke-width="0.35"/><path d="M35 10 V48" stroke="#aaa" stroke-width="0.35"/><path d="M47 10 V48" stroke="#aaa" stroke-width="0.35"/><path d="M59 10 V48" stroke="#aaa" stroke-width="0.35"/><path d="M69 10 V48" stroke="#aaa" stroke-width="0.35"/><path d="M2 10 H69" stroke="#aaa" stroke-width="0.35"/><path d="M2 14 H69" stroke="#aaa" stroke-width="0.35"/><path d="M2 23 H69" stroke="#aaa" stroke-width="0.35"/><path d="M2 33 H69" stroke="#aaa" stroke-width="0.35"/><path d="M2 48 H69" stroke="#aaa" stroke-width="0.35"/><rect x="12.00" y="11.00" width="4.44" height="0.6" fill="#666" opacity="0.21"/><rect x="17.14" y="11.00" width="5.45" height="0.6" fill="#666" opacity="0.19"/><rect x="23.29" y="11.00" width="5.02" height="0.6" fill="#666" opacity="0.26"/><rect x="29.01" y="11.00" width="4.93" height="0.6" fill="#666" opacity="0.29"/><rect x="34.64" y="11.00" width="2.46" height="0.6" fill="#666" opacity="0.22"/><rect x="37.80" y="11.00" width="4.33" height="0.6" fill="#666" opacity="0.22"/><rect x="42.83" y="11.00" width="2.55" height="0.6" fill="#666" opacity="0.21"/><rect x="46.08" y="11.00" width="4.93" height="0.6" fill="#666" opacity="0.28"/><rect x="51.71" y="11.00" width="4.69" height="0.6" fill="#666" opacity="0.21"/><rect x="57.10" y="11.00" width="5.20" height="0.6" fill="#666" opacity="0.24"/><rect x="63.00" y="11.00" width="2.43" height="0.6" fill="#666" opacity="0.24"/><rect x="66.13" y="11.00" width="0.87" height="0.6" fill="#666" opacity="0.20"/><rect x="12.00" y="12.40" width="3.78" height="0.6" fill="#666" opacity="0.33"/><rect x="16.48" y="12.40" width="4.08" height="0.6" fill="#666" opacity="0.27"/><rect x="21.26" y="12.40" width="4.95" height="0.6" fill="#666" opacity="0.33"/><rect x="26.92" y="12.40" width="3.46" height="0.6" fill="#666" opacity="0.33"/><rect x="31.08" y="12.40" width="1.58" height="0.6" fill="#666" opacity="0.23"/><rect x="33.35" y="12.40" width="2.19" height="0.6" fill="#666" opacity="0.33"/><rect x="36.24" y="12.40" width="4.26" height="0.6" fill="#666" opacity="0.30"/><rect x="41.20" y="12.40" width="2.65" height="0.6" fill="#666" opacity="0.28"/><rect x="44.55" y="12.40" width="5.05" height="0.6" fill="#666" opacity="0.23"/><rect x="50.30" y="12.40" width="1.96" height="0.6" fill="#666" opacity="0.22"/><rect x="52.96" y="12.40" width="3.37" height="0.6" fill="#666" opacity="0.32"/><rect x="57.04" y="12.40" width="3.72" height="0.6" fill="#666" opacity="0.26"/><rect x="61.46" y="12.40" width="3.51" height="0.6" fill="#666" opacity="0.24"/><rect x="65.66" y="12.40" width="1.34" height="0.6" fill="#666" opacity="0.26"/><rect x="12.00" y="15.00" width="3.29" height="0.6" fill="#666" opacity="0.25"/><rect x="15.99" y="15.00" width="4.13" height="0.6" fill="#666" opacity="0.23"/><rect x="20.82" y="15.00" width="4.04" height="0.6" fill="#666" opacity="0.21"/><rect x="25.56" y="15.00" width="2.71" height="0.6" fill="#666" opacity="0.24"/><rect x="28.97" y="15.00" width="2.07" height="0.6" fill="#666" opacity="0.29"/><rect x="31.73" y="15.00" width="2.74" height="0.6" fill="#666" opacity="0.29"/><rect x="35.17" y="15.00" width="5.32" height="0.6" fill="#666" opacity="0.23"/><rect x="41.20" y="15.00" width="5.07" height="0.6" fill="#666" opacity="0.29"/><rect x="46.97" y="15.00" width="4.17" height="0.6" fill="#666" opacity="0.21"/><rect x="51.84" y="15.00" width="3.33" height="0.6" fill="#666" opacity="0.27"/><rect x="55.87" y="15.00" width="2.68" height="0.6" fill="#666" opacity="0.23"/><rect x="59.25" y="15.00" width="2.74" height="0.6" fill="#666" opacity="0.23"/><rect x="62.69" y="15.00" width="4.31" height="0.6" fill="#666" opacity="0.24"/><rect x="12.00" y="16.50" width="2.67" height="0.6" fill="#666" opacity="0.25"/><rect x="15.37" y="16.50" width="5.40" height="0.6" fill="#666" opacity="0.35"/><rect x="21.47" y="16.50" width="4.66" height="0.6" fill="#666" opacity="0.31"/><rect x="26.83" y="16.50" width="2.44" height="0.6" fill="#666" opacity="0.26"/><rect x="29.97" y="16.50" width="2.72" height="0.6" fill="#666" opacity="0.30"/><rect x="33.39" y="16.50" width="1.76" height="0.6" fill="#666" opacity="0.33"/><rect x="35.85" y="16.50" width="4.41" height="0.6" fill="#666" opacity="0.25"/><rect x="40.96" y="16.50" width="4.87" height="0.6" fill="#666" opacity="0.31"/><rect x="46.53" y="16.50" width="5.18" height="0.6" fill="#666" opacity="0.31"/><rect x="52.40" y="16.50" width="4.68" height="0.6" fill="#666" opacity="0.30"/><rect x="57.79" y="16.50" width="3.95" height="0.6" fill="#666" opacity="0.31"/><rect x="62.44" y="16.50" width="1.59" height="0.6" fill="#666" opacity="0.26"/><rect x="64.73" y="16.50" width="2.27" height="0.6" fill="#666" opacity="0.30"/><rect x="12.00" y="18.00" width="3.10" height="0.6" fill="#666" opacity="0.26"/><rect x="15.80" y="18.00" width="3.54" height="0.6" fill="#666" opacity="0.34"/><rect x="20.04" y="18.00" width="4.63" height="0.6" fill="#666" opacity="0.30"/><rect x="25.38" y="18.00" width="4.77" height="0.6" fill="#666" opacity="0.25"/><rect x="30.84" y="18.00" width="1.90" height="0.6" fill="#666" opacity="0.23"/><rect x="33.45" y="18.00" width="1.99" height="0.6" fill="#666" opacity="0.22"/><rect x="36.13" y="18.00" width="4.00" height="0.6" fill="#666" opacity="0.33"/><rect x="40.84" y="18.00" width="1.95" height="0.6" fill="#666" opacity="0.30"/><rect x="43.49" y="18.00" width="5.26" height="0.6" fill="#666" opacity="0.31"/><rect x="49.45" y="18.00" width="2.11" height="0.6" fill="#666" opacity="0.30"/><rect x="52.27" y="18.00" width="2.52" height="0.6" fill="#666" opacity="0.24"/><rect x="55.49" y="18.00" width="1.54" height="0.6" fill="#666" opacity="0.28"/><rect x="57.73" y="18.00" width="5.18" height="0.6" fill="#666" opacity="0.23"/><rect x="63.61" y="18.00" width="2.09" height="0.6" fill="#666" opacity="0.27"/><rect x="66.40" y="18.00" width="0.60" height="0.6" fill="#666" opacity="0.28"/><rect x="12.00" y="19.50" width="1.62" height="0.6" fill="#666" opacity="0.19"/><rect x="14.32" y="19.50" width="4.17" height="0.6" fill="#666" opacity="0.26"/><rect x="19.19" y="19.50" width="3.51" height="0.6" fill="#666" opacity="0.19"/><rect x="23.40" y="19.50" width="2.36" height="0.6" fill="#666" opacity="0.22"/><rect x="26.47" y="19.50" width="1.93" height="0.6" fill="#666" opacity="0.19"/><rect x="29.10" y="19.50" width="3.24" height="0.6" fill="#666" opacity="0.26"/><rect x="33.03" y="19.50" width="2.45" height="0.6" fill="#666" opacity="0.26"/><rect x="36.18" y="19.50" width="5.00" height="0.6" fill="#666" opacity="0.22"/><rect x="41.89" y="19.50" width="2.40" height="0.6" fill="#666" opacity="0.19"/><rect x="44.99" y="19.50" width="4.17" height="0.6" fill="#666" opacity="0.25"/><rect x="49.86" y="19.50" width="4.94" height="0.6" fill="#666" opacity="0.20"/><rect x="55.50" y="19.50" width="3.21" height="0.6" fill="#666" opacity="0.18"/><rect x="59.41" y="19.50" width="2.72" height="0.6" fill="#666" opacity="0.20"/><rect x="62.82" y="19.50" width="2.00" height="0.6" fill="#666" opacity="0.18"/><rect x="65.52" y="19.50" width="1.48" height="0.6" fill="#666" opacity="0.20"/><rect x="12.00" y="21.00" width="3.86" height="0.6" fill="#666" opacity="0.26"/><rect x="16.56" y="21.00" width="3.46" height="0.6" fill="#666" opacity="0.22"/><rect x="20.72" y="21.00" width="4.03" height="0.6" fill="#666" opacity="0.28"/><rect x="25.45" y="21.00" width="4.40" height="0.6" fill="#666" opacity="0.24"/><rect x="30.55" y="21.00" width="3.35" height="0.6" fill="#666" opacity="0.30"/><rect x="34.59" y="21.00" width="4.41" height="0.6" fill="#666" opacity="0.21"/><rect x="39.71" y="21.00" width="2.84" height="0.6" fill="#666" opacity="0.23"/><rect x="43.25" y="21.00" width="4.34" height="0.6" fill="#666" opacity="0.25"/><rect x="48.29" y="21.00" width="3.06" height="0.6" fill="#666" opacity="0.23"/><rect x="52.05" y="21.00" width="3.32" height="0.6" fill="#666" opacity="0.29"/><rect x="56.07" y="21.00" width="4.02" height="0.6" fill="#666" opacity="0.23"/><rect x="60.79" y="21.00" width="3.08" height="0.6" fill="#666" opacity="0.28"/><rect x="64.58" y="21.00" width="1.72" height="0.6" fill="#666" opacity="0.31"/><rect x="16.40" y="22.50" width="5.33" height="0.6" fill="#666" opacity="0.25"/><rect x="22.43" y="22.50" width="2.39" height="0.6" fill="#666" opacity="0.23"/><rect x="25.52" y="22.50" width="4.88" height="0.6" fill="#666" opacity="0.27"/><rect x="31.10" y="22.50" width="4.15" height="0.6" fill="#666" opacity="0.25"/><rect x="35.95" y="22.50" width="4.47" height="0.6" fill="#666" opacity="0.27"/><rect x="41.12" y="22.50" width="3.56" height="0.6" fill="#666" opacity="0.24"/><rect x="45.37" y="22.50" width="4.69" height="0.6" fill="#666" opacity="0.23"/><rect x="50.77" y="22.50" width="2.37" height="0.6" fill="#666" opacity="0.24"/><rect x="53.84" y="22.50" width="2.90" height="0.6" fill="#666" opacity="0.25"/><rect x="57.44" y="22.50" width="4.49" height="0.6" fill="#666" opacity="0.27"/><rect x="62.63" y="22.50" width="1.94" height="0.6" fill="#666" opacity="0.19"/><rect x="65.27" y="22.50" width="1.73" height="0.6" fill="#666" opacity="0.26"/><rect x="12.00" y="24.00" width="2.12" height="0.6" fill="#666" opacity="0.27"/><rect x="14.82" y="24.00" width="3.95" height="0.6" fill="#666" opacity="0.34"/><rect x="19.47" y="24.00" width="1.97" height="0.6" fill="#666" opacity="0.37"/><rect x="22.14" y="24.00" width="2.42" height="0.6" fill="#666" opacity="0.27"/><rect x="25.26" y="24.00" width="3.25" height="0.6" fill="#666" opacity="0.27"/><rect x="29.21" y="24.00" width="1.86" height="0.6" fill="#666" opacity="0.25"/><rect x="31.77" y="24.00" width="1.63" height="0.6" fill="#666" opacity="0.26"/><rect x="34.10" y="24.00" width="4.22" height="0.6" fill="#666" opacity="0.35"/><rect x="39.02" y="24.00" width="4.59" height="0.6" fill="#666" opacity="0.30"/><rect x="44.31" y="24.00" width="4.51" height="0.6" fill="#666" opacity="0.26"/><rect x="49.52" y="24.00" width="4.96" height="0.6" fill="#666" opacity="0.30"/><rect x="55.18" y="24.00" width="1.99" height="0.6" fill="#666" opacity="0.29"/><rect x="57.87" y="24.00" width="2.27" height="0.6" fill="#666" opacity="0.34"/><rect x="60.84" y="24.00" width="3.00" height="0.6" fill="#666" opacity="0.25"/><rect x="64.54" y="24.00" width="2.27" height="0.6" fill="#666" opacity="0.25"/><rect x="12.00" y="25.50" width="3.87" height="0.6" fill="#666" opacity="0.28"/><rect x="16.57" y="25.50" width="4.43" height="0.6" fill="#666" opacity="0.30"/><rect x="21.70" y="25.50" width="1.67" height="0.6" fill="#666" opacity="0.35"/><rect x="24.08" y="25.50" width="2.90" height="0.6" fill="#666" opacity="0.31"/><rect x="27.67" y="25.50" width="3.17" height="0.6" fill="#666" opacity="0.35"/><rect x="31.54" y="25.50" width="2.17" height="0.6" fill="#666" opacity="0.24"/><rect x="34.41" y="25.50" width="1.67" height="0.6" fill="#666" opacity="0.28"/><rect x="36.78" y="25.50" width="4.89" height="0.6" fill="#666" opacity="0.29"/><rect x="42.37" y="25.50" width="5.23" height="0.6" fill="#666" opacity="0.25"/><rect x="48.30" y="25.50" width="5.36" height="0.6" fill="#666" opacity="0.25"/><rect x="54.36" y="25.50" width="5.04" height="0.6" fill="#666" opacity="0.26"/><rect x="60.10" y="25.50" width="3.83" height="0.6" fill="#666" opacity="0.31"/><rect x="64.63" y="25.50" width="2.37" height="0.6" fill="#666" opacity="0.28"/><rect x="12.00" y="27.00" width="3.65" height="0.6" fill="#666" opacity="0.32"/><rect x="16.35" y="27.00" width="2.76" height="0.6" fill="#666" opacity="0.28"/><rect x="19.80" y="27.00" width="3.85" height="0.6" fill="#666" opacity="0.25"/><rect x="24.35" y="27.00" width="2.09" height="0.6" fill="#666" opacity="0.26"/><rect x="27.14" y="27.00" width="2.63" height="0.6" fill="#666" opacity="0.28"/><rect x="30.47" y="27.00" width="3.13" height="0.6" fill="#666" opacity="0.22"/><rect x="34.30" y="27.00" width="4.26" height="0.6" fill="#666" opacity="0.32"/><rect x="39.26" y="27.00" width="3.97" height="0.6" fill="#666" opacity="0.25"/><rect x="43.93" y="27.00" width="2.71" height="0.6" fill="#666" opacity="0.32"/><rect x="47.34" y="27.00" width="3.28" height="0.6" fill="#666" opacity="0.29"/><rect x="51.32" y="27.00" width="1.80" height="0.6" fill="#666" opacity="0.30"/><rect x="12.00" y="28.50" width="4.10" height="0.6" fill="#666" opacity="0.30"/><rect x="16.80" y="28.50" width="4.64" height="0.6" fill="#666" opacity="0.20"/><rect x="22.15" y="28.50" width="1.96" height="0.6" fill="#666" opacity="0.29"/><rect x="24.80" y="28.50" width="3.11" height="0.6" fill="#666" opacity="0.30"/><rect x="28.61" y="28.50" width="3.30" height="0.6" fill="#666" opacity="0.28"/><rect x="32.61" y="28.50" width="2.37" height="0.6" fill="#666" opacity="0.30"/><rect x="35.68" y="28.50" width="3.40" height="0.6" fill="#666" opacity="0.20"/><rect x="39.78" y="28.50" width="2.29" height="0.6" fill="#666" opacity="0.20"/><rect x="42.77" y="28.50" width="3.18" height="0.6" fill="#666" opacity="0.30"/><rect x="46.65" y="28.50" width="5.38" height="0.6" fill="#666" opacity="0.29"/><rect x="52.73" y="28.50" width="3.14" height="0.6" fill="#666" opacity="0.28"/><rect x="56.57" y="28.50" width="4.47" height="0.6" fill="#666" opacity="0.28"/><rect x="61.74" y="28.50" width="5.26" height="0.6" fill="#666" opacity="0.28"/><rect x="12.00" y="30.00" width="3.17" height="0.6" fill="#666" opacity="0.21"/><rect x="15.87" y="30.00" width="4.51" height="0.6" fill="#666" opacity="0.20"/><rect x="21.08" y="30.00" width="2.31" height="0.6" fill="#666" opacity="0.26"/><rect x="24.09" y="30.00" width="1.66" height="0.6" fill="#666" opacity="0.19"/><rect x="26.45" y="30.00" width="1.50" height="0.6" fill="#666" opacity="0.19"/><rect x="28.65" y="30.00" width="1.89" height="0.6" fill="#666" opacity="0.26"/><rect x="31.25" y="30.00" width="2.58" height="0.6" fill="#666" opacity="0.20"/><rect x="34.52" y="30.00" width="3.49" height="0.6" fill="#666" opacity="0.22"/><rect x="38.71" y="30.00" width="1.51" height="0.6" fill="#666" opacity="0.19"/><rect x="40.93" y="30.00" width="2.52" height="0.6" fill="#666" opacity="0.23"/><rect x="44.14" y="30.00" width="1.97" height="0.6" fill="#666" opacity="0.23"/><rect x="46.82" y="30.00" width="3.44" height="0.6" fill="#666" opacity="0.28"/><rect x="50.95" y="30.00" width="3.94" height="0.6" fill="#666" opacity="0.22"/><rect x="55.59" y="30.00" width="2.39" height="0.6" fill="#666" opacity="0.20"/><rect x="58.68" y="30.00" width="3.05" height="0.6" fill="#666" opacity="0.28"/><rect x="62.43" y="30.00" width="4.57" height="0.6" fill="#666" opacity="0.20"/><rect x="2.00" y="15.00" width="5.34" height="0.6" fill="#666" opacity="0.27"/><rect x="8.04" y="15.00" width="1.96" height="0.6" fill="#666" opacity="0.32"/><rect x="2.00" y="16.50" width="1.61" height="0.6" fill="#666" opacity="0.22"/><rect x="4.31" y="16.50" width="4.49" height="0.6" fill="#666" opacity="0.21"/><rect x="9.49" y="16.50" width="0.51" height="0.6" fill="#666" opacity="0.21"/><rect x="2.00" y="18.00" width="3.11" height="0.6" fill="#666" opacity="0.37"/><rect x="5.81" y="18.00" width="1.75" height="0.6" fill="#666" opacity="0.35"/><rect x="8.26" y="18.00" width="1.74" height="0.6" fill="#666" opacity="0.26"/><rect x="2.00" y="19.50" width="5.32" height="0.6" fill="#666" opacity="0.24"/><rect x="8.02" y="19.50" width="1.98" height="0.6" fill="#666" opacity="0.32"/><rect x="2.00" y="21.00" width="1.83" height="0.6" fill="#666" opacity="0.29"/><rect x="4.53" y="21.00" width="3.40" height="0.6" fill="#666" opacity="0.30"/><rect x="8.62" y="21.00" width="1.38" height="0.6" fill="#666" opacity="0.28"/><rect x="2.00" y="22.50" width="1.57" height="0.6" fill="#666" opacity="0.29"/><rect x="4.27" y="22.50" width="1.71" height="0.6" fill="#666" opacity="0.34"/><rect x="6.68" y="22.50" width="2.92" height="0.6" fill="#666" opacity="0.37"/><rect x="2.00" y="24.00" width="4.97" height="0.6" fill="#666" opacity="0.26"/><rect x="7.67" y="24.00" width="2.33" height="0.6" fill="#666" opacity="0.35"/><rect x="2.00" y="25.50" width="2.57" height="0.6" fill="#666" opacity="0.28"/><rect x="5.27" y="25.50" width="2.27" height="0.6" fill="#666" opacity="0.26"/><rect x="8.24" y="25.50" width="1.76" height="0.6" fill="#666" opacity="0.26"/><rect x="2.00" y="27.00" width="2.78" height="0.6" fill="#666" opacity="0.28"/><rect x="5.48" y="27.00" width="1.56" height="0.6" fill="#666" opacity="0.32"/><rect x="2.00" y="28.50" width="4.51" height="0.6" fill="#666" opacity="0.21"/><rect x="7.21" y="28.50" width="2.79" height="0.6" fill="#666" opacity="0.20"/><rect x="2.00" y="30.00" width="2.74" height="0.6" fill="#666" opacity="0.24"/><rect x="5.44" y="30.00" width="4.56" height="0.6" fill="#666" opacity="0.34"/><rect x="2.00" y="31.50" width="3.11" height="0.6" fill="#666" opacity="0.31"/><rect x="5.81" y="31.50" width="0.84" height="0.6" fill="#666" opacity="0.29"/><rect x="2.00" y="33.00" width="2.51" height="0.6" fill="#666" opacity="0.20"/><rect x="5.21" y="33.00" width="1.94" height="0.6" fill="#666" opacity="0.21"/><rect x="7.85" y="33.00" width="2.15" height="0.6" fill="#666" opacity="0.24"/><rect x="2.00" y="34.50" width="4.74" height="0.6" fill="#666" opacity="0.25"/><rect x="7.44" y="34.50" width="2.56" height="0.6" fill="#666" opacity="0.25"/><rect x="2.00" y="36.00" width="4.13" height="0.6" fill="#666" opacity="0.29"/><rect x="6.83" y="36.00" width="1.80" height="0.6" fill="#666" opacity="0.25"/><rect x="9.33" y="36.00" width="0.67" height="0.6" fill="#666" opacity="0.27"/><rect x="2.00" y="37.50" width="2.15" height="0.6" fill="#666" opacity="0.22"/><rect x="4.85" y="37.50" width="4.40" height="0.6" fill="#666" opacity="0.24"/><rect x="2.00" y="39.00" width="3.72" height="0.6" fill="#666" opacity="0.27"/><rect x="6.42" y="39.00" width="3.28" height="0.6" fill="#666" opacity="0.32"/><rect x="2.00" y="40.50" width="2.77" height="0.6" fill="#666" opacity="0.21"/><rect x="5.47" y="40.50" width="2.96" height="0.6" fill="#666" opacity="0.19"/><rect x="9.13" y="40.50" width="0.87" height="0.6" fill="#666" opacity="0.25"/><rect x="2.00" y="42.00" width="2.81" height="0.6" fill="#666" opacity="0.31"/><rect x="5.51" y="42.00" width="4.49" height="0.6" fill="#666" opacity="0.31"/><rect x="2.00" y="43.50" width="5.49" height="0.6" fill="#666" opacity="0.28"/><rect x="8.19" y="43.50" width="1.81" height="0.6" fill="#666" opacity="0.24"/><rect x="12.00" y="34.00" width="2.29" height="0.6" fill="#555" opacity="0.27"/><rect x="14.99" y="34.00" width="3.48" height="0.6" fill="#555" opacity="0.27"/><rect x="19.17" y="34.00" width="3.33" height="0.6" fill="#555" opacity="0.25"/><rect x="23.20" y="34.00" width="2.52" height="0.6" fill="#555" opacity="0.30"/><rect x="26.42" y="34.00" width="2.80" height="0.6" fill="#555" opacity="0.29"/><rect x="29.91" y="34.00" width="4.65" height="0.6" fill="#555" opacity="0.32"/><rect x="35.26" y="34.00" width="5.28" height="0.6" fill="#555" opacity="0.24"/><rect x="41.24" y="34.00" width="2.45" height="0.6" fill="#555" opacity="0.30"/><rect x="44.39" y="34.00" width="3.56" height="0.6" fill="#555" opacity="0.24"/><rect x="12.00" y="35.50" width="4.84" height="0.6" fill="#555" opacity="0.29"/><rect x="17.54" y="35.50" width="2.70" height="0.6" fill="#555" opacity="0.26"/><rect x="20.94" y="35.50" width="5.40" height="0.6" fill="#555" opacity="0.29"/><rect x="27.04" y="35.50" width="4.41" height="0.6" fill="#555" opacity="0.33"/><rect x="32.15" y="35.50" width="3.87" height="0.6" fill="#555" opacity="0.33"/><rect x="36.72" y="35.50" width="4.80" height="0.6" fill="#555" opacity="0.34"/><rect x="42.23" y="35.50" width="2.71" height="0.6" fill="#555" opacity="0.28"/><rect x="45.64" y="35.50" width="3.41" height="0.6" fill="#555" opacity="0.39"/><rect x="49.75" y="35.50" width="2.08" height="0.6" fill="#555" opacity="0.35"/><rect x="52.53" y="35.50" width="4.02" height="0.6" fill="#555" opacity="0.28"/><rect x="57.25" y="35.50" width="2.33" height="0.6" fill="#555" opacity="0.35"/><rect x="60.28" y="35.50" width="3.25" height="0.6" fill="#555" opacity="0.32"/><rect x="64.23" y="35.50" width="3.42" height="0.6" fill="#555" opacity="0.27"/><rect x="68.35" y="35.50" width="0.65" height="0.6" fill="#555" opacity="0.34"/><rect x="12.00" y="37.00" width="4.75" height="0.6" fill="#555" opacity="0.31"/><rect x="17.45" y="37.00" width="3.68" height="0.6" fill="#555" opacity="0.23"/><rect x="21.83" y="37.00" width="2.09" height="0.6" fill="#555" opacity="0.23"/><rect x="24.62" y="37.00" width="1.82" height="0.6" fill="#555" opacity="0.29"/><rect x="27.13" y="37.00" width="3.67" height="0.6" fill="#555" opacity="0.24"/><rect x="31.51" y="37.00" width="5.14" height="0.6" fill="#555" opacity="0.29"/><rect x="37.35" y="37.00" width="4.67" height="0.6" fill="#555" opacity="0.31"/><rect x="42.72" y="37.00" width="4.23" height="0.6" fill="#555" opacity="0.28"/><rect x="47.64" y="37.00" width="5.44" height="0.6" fill="#555" opacity="0.23"/><rect x="53.78" y="37.00" width="4.26" height="0.6" fill="#555" opacity="0.32"/><rect x="58.74" y="37.00" width="3.41" height="0.6" fill="#555" opacity="0.31"/><rect x="62.85" y="37.00" width="2.23" height="0.6" fill="#555" opacity="0.26"/><rect x="65.78" y="37.00" width="2.58" height="0.6" fill="#555" opacity="0.26"/><rect x="12.00" y="38.50" width="2.85" height="0.6" fill="#555" opacity="0.29"/><rect x="15.55" y="38.50" width="2.71" height="0.6" fill="#555" opacity="0.21"/><rect x="18.96" y="38.50" width="5.48" height="0.6" fill="#555" opacity="0.26"/><rect x="25.14" y="38.50" width="1.57" height="0.6" fill="#555" opacity="0.26"/><rect x="27.41" y="38.50" width="2.08" height="0.6" fill="#555" opacity="0.22"/><rect x="30.19" y="38.50" width="4.46" height="0.6" fill="#555" opacity="0.27"/><rect x="35.35" y="38.50" width="3.21" height="0.6" fill="#555" opacity="0.26"/><rect x="39.25" y="38.50" width="3.73" height="0.6" fill="#555" opacity="0.25"/><rect x="43.69" y="38.50" width="1.90" height="0.6" fill="#555" opacity="0.28"/><rect x="46.29" y="38.50" width="4.58" height="0.6" fill="#555" opacity="0.25"/><rect x="51.58" y="38.50" width="3.12" height="0.6" fill="#555" opacity="0.27"/><rect x="55.39" y="38.50" width="3.39" height="0.6" fill="#555" opacity="0.25"/><rect x="59.48" y="38.50" width="5.00" height="0.6" fill="#555" opacity="0.30"/><rect x="65.18" y="38.50" width="2.10" height="0.6" fill="#555" opacity="0.22"/><rect x="67.99" y="38.50" width="1.01" height="0.6" fill="#555" opacity="0.30"/><rect x="12.00" y="40.00" width="1.73" height="0.6" fill="#555" opacity="0.31"/><rect x="14.43" y="40.00" width="5.22" height="0.6" fill="#555" opacity="0.30"/><rect x="20.35" y="40.00" width="4.44" height="0.6" fill="#555" opacity="0.32"/><rect x="25.50" y="40.00" width="3.59" height="0.6" fill="#555" opacity="0.32"/><rect x="29.79" y="40.00" width="2.55" height="0.6" fill="#555" opacity="0.22"/><rect x="33.04" y="40.00" width="4.86" height="0.6" fill="#555" opacity="0.29"/><rect x="38.60" y="40.00" width="4.69" height="0.6" fill="#555" opacity="0.23"/><rect x="43.99" y="40.00" width="2.70" height="0.6" fill="#555" opacity="0.28"/><rect x="47.39" y="40.00" width="1.76" height="0.6" fill="#555" opacity="0.25"/><rect x="49.84" y="40.00" width="3.91" height="0.6" fill="#555" opacity="0.32"/><rect x="54.46" y="40.00" width="4.38" height="0.6" fill="#555" opacity="0.26"/><rect x="59.53" y="40.00" width="3.13" height="0.6" fill="#555" opacity="0.27"/><rect x="63.37" y="40.00" width="4.47" height="0.6" fill="#555" opacity="0.33"/><rect x="12.00" y="41.50" width="1.68" height="0.6" fill="#555" opacity="0.29"/><rect x="14.38" y="41.50" width="2.59" height="0.6" fill="#555" opacity="0.28"/><rect x="17.68" y="41.50" width="2.15" height="0.6" fill="#555" opacity="0.27"/><rect x="20.53" y="41.50" width="4.20" height="0.6" fill="#555" opacity="0.31"/><rect x="25.43" y="41.50" width="1.93" height="0.6" fill="#555" opacity="0.37"/><rect x="28.06" y="41.50" width="4.84" height="0.6" fill="#555" opacity="0.29"/><rect x="33.60" y="41.50" width="4.82" height="0.6" fill="#555" opacity="0.36"/><rect x="39.12" y="41.50" width="3.62" height="0.6" fill="#555" opacity="0.27"/><rect x="43.44" y="41.50" width="4.34" height="0.6" fill="#555" opacity="0.37"/><rect x="48.47" y="41.50" width="5.05" height="0.6" fill="#555" opacity="0.38"/><rect x="54.22" y="41.50" width="1.26" height="0.6" fill="#555" opacity="0.39"/><rect x="12.00" y="43.00" width="4.06" height="0.6" fill="#555" opacity="0.30"/><rect x="16.76" y="43.00" width="5.13" height="0.6" fill="#555" opacity="0.33"/><rect x="22.58" y="43.00" width="4.94" height="0.6" fill="#555" opacity="0.32"/><rect x="28.22" y="43.00" width="3.32" height="0.6" fill="#555" opacity="0.24"/><rect x="32.24" y="43.00" width="4.09" height="0.6" fill="#555" opacity="0.35"/><rect x="37.03" y="43.00" width="2.26" height="0.6" fill="#555" opacity="0.36"/><rect x="12.00" y="44.50" width="4.35" height="0.6" fill="#555" opacity="0.33"/><rect x="17.05" y="44.50" width="2.62" height="0.6" fill="#555" opacity="0.28"/><rect x="20.38" y="44.50" width="2.06" height="0.6" fill="#555" opacity="0.34"/><rect x="23.14" y="44.50" width="1.57" height="0.6" fill="#555" opacity="0.27"/><rect x="25.41" y="44.50" width="4.37" height="0.6" fill="#555" opacity="0.31"/><rect x="30.48" y="44.50" width="1.57" height="0.6" fill="#555" opacity="0.31"/><rect x="32.75" y="44.50" width="5.20" height="0.6" fill="#555" opacity="0.32"/><rect x="38.64" y="44.50" width="1.77" height="0.6" fill="#555" opacity="0.27"/><rect x="12.00" y="46.00" width="2.60" height="0.6" fill="#555" opacity="0.22"/><rect x="15.30" y="46.00" width="3.92" height="0.6" fill="#555" opacity="0.30"/><rect x="19.92" y="46.00" width="3.53" height="0.6" fill="#555" opacity="0.28"/><rect x="24.15" y="46.00" width="2.67" height="0.6" fill="#555" opacity="0.32"/><rect x="27.52" y="46.00" width="2.65" height="0.6" fill="#555" opacity="0.31"/><rect x="30.87" y="46.00" width="1.56" height="0.6" fill="#555" opacity="0.28"/><rect x="33.12" y="46.00" width="4.98" height="0.6" fill="#555" opacity="0.27"/><rect x="38.81" y="46.00" width="2.36" height="0.6" fill="#555" opacity="0.23"/><rect x="41.87" y="46.00" width="5.45" height="0.6" fill="#555" opacity="0.32"/><rect x="48.02" y="46.00" width="2.44" height="0.6" fill="#555" opacity="0.25"/><rect x="51.17" y="46.00" width="4.81" height="0.6" fill="#555" opacity="0.31"/><rect x="56.68" y="46.00" width="1.62" height="0.6" fill="#555" opacity="0.27"/><rect x="59.00" y="46.00" width="2.50" height="0.6" fill="#555" opacity="0.22"/><rect x="62.19" y="46.00" width="4.27" height="0.6" fill="#555" opacity="0.26"/><rect x="67.17" y="46.00" width="1.83" height="0.6" fill="#555" opacity="0.29"/></svg></div>
<div class="num" style="top:204px;color:#8a6464">1</div>
<div class="num" style="top:268px">2</div>
<div class="num" style="top:332px">3</div>
<div class="num" style="top:395px">4</div>
<div class="num" style="top:458px">5</div>
<div class="a" style="left:100px;top:506px;width:110px;height:1px;background:#e6e6e6"></div>
<!-- left scrollbar -->
<div class="a" style="left:200px;top:196px;width:9px;height:310px;background:#f0f0f0"></div>
<div class="a" style="left:200px;top:196px;width:9px;height:280px;background:#fff;border:1px solid #cfcfcf"></div>
<div class="a" style="left:200px;top:196px;width:9px;height:9px;background:#fff;border:1px solid #cfcfcf"></div>
<svg style="left:202px;top:199px" width="5" height="3"><path d="M0 3 L2.5 0 L5 3 Z" fill="#222"/></svg>
<div class="a" style="left:200px;top:497px;width:9px;height:9px;background:#fff;border:1px solid #cfcfcf"></div>
<svg style="left:202px;top:500px" width="5" height="3"><path d="M0 0 L2.5 3 L5 0 Z" fill="#222"/></svg>
<div class="a" style="left:209px;top:194px;width:3px;height:313px;background:#dadada"></div>
<!-- slide -->
<div id="slide"><div id="doc">
<div class="i1 j" style="letter-spacing:-0.0901px;top:0.20px">Отчет по самооценке организации образования составлен в соответствии с</div>
<div class="j" style="top:6.46px">Методическими рекомендациями по организации и проведению самооценки</div>
<div class="j" style="top:12.71px">организаций образования, утвержденными приказом № 12 от 27.12.2022 года</div>
<div class="j" style="top:18.97px">РГУ «Комитет по обеспечению качества в сфере образования Министерства</div>
<div class="j" style="top:25.22px">просвещения Республики Казахстан», в соответствии с приказом Министра</div>
<div class="j" style="top:31.48px">просвещения Республики Казахстан от 5 декабря 2022 года № 486 "Об</div>
<div class="j" style="letter-spacing:-0.0629px;top:37.73px">утверждении критериев оценки организаций образования", регламентирующим</div>
<div class="j" style="letter-spacing:-0.0155px;top:43.99px">образовательную деятельность организаций образования, приказом Министра</div>
<div class="j" style="top:50.24px">просвещения № 473 от 24.11.2022 «Квалификационные требования,</div>
<div class="j" style="letter-spacing:-0.1027px;top:56.50px">предъявляемые к образовательной деятельности организаций, предоставляющих</div>
<div class="j" style="top:62.75px">начальное, основное среднее, общее среднее ... и перечень документов,</div>
<div class="" style="top:69.00px">подтверждающих соответствие им».</div>
<div class="i1 j" style="top:75.26px">Самооценка организации образования осуществлена путем анализа</div>
<div class="j" style="letter-spacing:-0.0257px;top:81.52px">предоставляемых образовательных услуг на соответствие общим требованиям</div>
<div class="j" style="top:87.77px">государственного общеобязательного стандарта соответствующего уровня</div>
<div class="j" style="letter-spacing:-0.051px;top:94.03px">образования (далее – ГОСО), утвержденного приказом Министра просвещения</div>
<div class="j" style="top:100.28px">Республики Казахстан от 3 августа 2022 года №348 (зарегистрирован в</div>
<div class="j" style="top:106.54px">Министерстве Юстиции Республики Казахстан 5 августа 2022 года № 29031):</div>
<div class="" style="top:112.79px">1) содержания образования с ориентиром на результаты обучения;</div>
<div class="" style="top:119.05px">2) максимального объема учебной нагрузки воспитанников и обучающихся;</div>
<div class="" style="top:125.30px">3) уровня подготовки воспитанников и обучающихся;</div>
<div class="" style="top:131.56px">4) срока обучения.</div>
<div class="i1" style="top:137.81px">При анализе общих требований ГОСО использованы Критерии оценки.</div>
<div class="i1" style="top:144.06px">Оценочным периодом являются предыдущие два учебных года:</div>
<div class="i2" style="top:150.32px">- 2022-2023 учебный год</div>
<div class="i2" style="top:156.57px">- 2023-2024 учебный год</div>
<div class="i2 j" style="top:162.83px">- текущий учебный год на 01.10.2024 года за один месяц до начала</div>
<div class="" style="top:169.08px">государственной аттестации в ноябре 2024 года.</div>
<div class="i1 j" style="top:175.34px">Состав комиссии согласован на педагогическом совете школы протокол</div>
<div class="j" style="top:181.60px">№10 от 31.05.2024 года, утвержден приказом директора школы № 33 от</div>
<div class="" style="top:187.85px">31.05.2024 года.</div>
<div class="i1 j" style="top:194.11px">Самооценка проведена комиссией, состоящей из 7 сотрудников</div>
<div class="" style="top:200.36px">организации образования, в том числе председателя - директора школы.</div>
<div class="i1 j" style="letter-spacing:-0.0839px;top:206.62px">Отчет по самооценке рассмотрен комиссией на заседании педагогического</div>
<div class="j" style="top:212.87px">совета, протокол № 4 от 27.09.2024 года. Отчет доведен до всех участников</div>
<div class="" style="top:219.12px">образовательного процесса.</div>
<div class="i1 j" style="letter-spacing:-0.1328px;top:224.50px">Директор КГУ «Средняя школа Токсан би» КГУ «Отдел образования имени</div>
<div class="j" style="top:230.33px">Габита Мусрепова» КГУ «Управление образования акимата Северо-</div>
<div class="j" style="top:236.16px">Казахстанской области» Воронцова А.С. выступила с отчетом перед</div>
<div class="j" style="letter-spacing:-0.0498px;top:241.99px">Попечительским советом по результатам самооценки организации образования</div>
<div class="" style="top:247.82px">30.09.2024 года, протокол № 2.</div>
</div></div>
<svg style="left:389.5px;top:424px" width="9" height="12"><path d="M0.8 0.8 V9.2 L2.8 7.3 L4.4 10.6 L5.9 9.9 L4.4 6.8 H7.2 Z" fill="#fff" stroke="#3a3a3a" stroke-width="0.9" stroke-linejoin="round"/></svg>
<!-- right scrollbar -->
<div class="a" style="left:865px;top:196px;width:9px;height:290px;background:#f0f0f0"></div>
<div class="a" style="left:865px;top:196px;width:9px;height:56px;background:#fff;border:1px solid #cfcfcf"></div>
<div class="a" style="left:865px;top:196px;width:9px;height:9px;background:#fff;border:1px solid #cfcfcf"></div>
<svg style="left:867px;top:199px" width="5" height="3"><path d="M0 3 L2.5 0 L5 3 Z" fill="#222"/></svg>
<div class="a" style="left:865px;top:447px;width:9px;height:9px;background:#fff;border:1px solid #cfcfcf"></div>
<svg style="left:867px;top:450px" width="5" height="3"><path d="M0 0 L2.5 3 L5 0 Z" fill="#222"/></svg>
<svg style="left:866px;top:457px" width="7" height="17" fill="#6a6a6a"><path d="M3.5 0 L6.5 3.3 H0.5 Z M3.5 2.8 L6.5 6.1 H0.5 Z"/><path d="M3.5 16 L6.5 12.7 H0.5 Z M3.5 13.2 L6.5 9.9 H0.5 Z"/></svg>
<!-- notes -->
<div class="a" style="left:212px;top:480px;width:653px;height:1px;background:#dcdcdc"></div>
<div class="a" style="left:212px;top:486px;width:662px;height:1px;background:#d2d2d2"></div>
<div class="a" style="left:212px;top:487px;width:662px;height:20px;background:#e8e8e8"></div>
<div class="t" style="left:218px;top:493px;font-size:8.2px;color:#4a4a4a">Щелкните, чтобы добавить заметки</div>
<!-- status bar -->
<div class="a" style="left:100px;top:506px;width:774px;height:13px;background:#f3f3f3"></div>
<div class="st" style="left:107px">Слайд 1 из 5</div>
<svg style="left:154px;top:509px" width="9" height="7"><path d="M0.5 0.5 H4 V6.5 H0.5 Z M5 6 L8.5 2.5 L7 1 L5 3 Z" fill="none" stroke="#777" stroke-width="0.7"/></svg>
<div class="st" style="left:172px">русский (Казахстан)</div>
<svg style="left:238px;top:509px" width="9" height="8"><path d="M1 4 Q1 0.5 4 0.5 Q7 0.5 7 3.5 M3 4 Q3 2.5 4.5 2.5 M4.5 4.5 L7.5 7.5 M6.5 5 L8 4" fill="none" stroke="#555" stroke-width="0.8"/></svg>
<div class="st" style="left:248px;font-size:6.69px">Специальные возможности: не поддерживаются</div>
<svg style="left:566px;top:509px" width="7" height="7"><path d="M3.5 0.5 L5 2.5 H6.5 V6.5 H0.5 V2.5 H2 Z" fill="#aaa" stroke="#888" stroke-width="0.5"/></svg>
<div class="st" style="left:575px">Заметки</div>
<svg style="left:611px;top:509px" width="9" height="8"><path d="M0.5 0.5 H8.5 V5.5 H3.5 L1.5 7.5 V5.5 H0.5 Z" fill="#444"/></svg>
<div class="st" style="left:621px">Примечания</div>
<div class="a" style="left:671.5px;top:506px;width:22px;height:12.5px;background:#cbcbcb"></div>
<svg style="left:678px;top:509px" width="10" height="8" fill="none" stroke="#777" stroke-width="0.8"><path d="M0.5 0.5 H9 V7.5 H0.5 Z M2.5 0.5 V5.5 H9"/></svg>
<svg style="left:700px;top:508px" width="11" height="9" fill="none" stroke="#888" stroke-width="0.8"><rect x="0.5" y="0.5" width="4" height="3"/><rect x="6" y="0.5" width="4" height="3"/><rect x="0.5" y="5" width="4" height="3"/><rect x="6" y="5" width="4" height="3"/></svg>
<svg style="left:723px;top:509px" width="10" height="8" fill="none" stroke="#888" stroke-width="0.8"><path d="M0.5 0.5 H9 V7.5 H0.5 Z M4.75 0.5 V7.5 M1.5 2 H3.5 M1.5 4 H3.5 M6 2 H8 M6 4 H8"/></svg>
<svg style="left:746px;top:508px" width="10" height="9" fill="none" stroke="#888" stroke-width="0.8"><path d="M0.5 0.5 H9 M1 0.5 V5 H8.5 V0.5 M4.75 5 V8.5 M3 8.5 H6.5"/></svg>
<div class="a" style="left:766px;top:512px;width:3px;height:1px;background:#777"></div>
<div class="a" style="left:773px;top:512px;width:56px;height:1px;background:#555"></div>
<div class="a" style="left:801px;top:511px;width:1px;height:3px;background:#555"></div>
<div class="a" style="left:790px;top:509px;width:3px;height:7px;background:#333"></div>
<div class="a" style="left:833px;top:512px;width:4px;height:1px;background:#999"></div>
<div class="a" style="left:834.5px;top:510.5px;width:1px;height:4px;background:#999"></div>
<div class="st" style="left:844px">68%</div>
<svg style="left:863px;top:508px" width="8" height="8" fill="none" stroke="#777" stroke-width="0.8"><path d="M0.5 0.5 H7.5 V7.5 H0.5 Z M2 2 L3 3 M6 2 L5 3 M2 6 L3 5 M6 6 L5 5"/></svg>

<!-- ===== taskbar ===== -->
<div class="a" style="left:0;top:519px;width:974px;height:29px;background:#ebe2e0"></div>
<div class="a" style="left:280px;top:519px;width:33px;height:29px;background:#f2ecea"></div>
<div class="a" style="left:108px;top:546px;width:29px;height:2px;background:#e76b26"></div>
<div class="a" style="left:248px;top:546px;width:29px;height:2px;background:#e76b26"></div>
<div class="a" style="left:280px;top:546px;width:33px;height:2px;background:#e76b26"></div>
<svg style="left:11px;top:528px" width="12" height="12" fill="#111"><path d="M0 1.8 L5 1.1 V5.6 H0 Z M5.8 1 L12 0 V5.6 H5.8 Z M0 6.4 H5 V10.9 L0 10.2 Z M5.8 6.4 H12 V12 L5.8 11 Z"/></svg>
<svg style="left:45px;top:528px" width="13" height="12" fill="none" stroke="#111" stroke-width="1.2"><circle cx="8" cy="4.5" r="3.6"/><path d="M5.3 7.2 L0.8 11.4"/></svg>
<svg style="left:79px;top:525px" width="18" height="18"><path d="M5 4 Q5 1 9 1 Q13 1 13 4" fill="none" stroke="#2b8ed8" stroke-width="1.3"/><rect x="1" y="4" width="16" height="13" rx="2" fill="#1e5fae"/><rect x="5" y="7" width="3.6" height="3.6" fill="#f25022"/><rect x="9.4" y="7" width="3.6" height="3.6" fill="#7fba00"/><rect x="5" y="11.4" width="3.6" height="3.6" fill="#00a4ef"/><rect x="9.4" y="11.4" width="3.6" height="3.6" fill="#ffb900"/></svg>
<svg style="left:113px;top:524.5px" width="19" height="19"><defs><linearGradient id="eg" x1="0.2" y1="1" x2="0.5" y2="0"><stop offset="0" stop-color="#0b55a8"/><stop offset="0.6" stop-color="#1b8fdc"/><stop offset="1" stop-color="#30b8e0"/></linearGradient><linearGradient id="eg2" x1="0" y1="0" x2="1" y2="1"><stop offset="0" stop-color="#2fc3c8"/><stop offset="1" stop-color="#4fd86a"/></linearGradient></defs><circle cx="9.5" cy="9.5" r="8.6" fill="url(#eg)"/><path d="M5 3 Q9.5 0.2 14 2.5 Q18.3 5 18 10 Q17.5 13 14.5 13 Q11.5 13 11 10.5 Q11 8 8 7.5 Q6 7.5 4.5 9 Q3.5 5 5 3 Z" fill="url(#eg2)"/><circle cx="8.8" cy="10.6" r="2.5" fill="#e6eef2"/><path d="M3 13 Q5.5 18 11 17.8 Q15.5 17.5 17.6 13.5 Q15 15.5 12 14.8 Q9 14 8.5 12.5 Z" fill="#0a4a92"/></svg>
<svg style="left:149px;top:525.5px" width="18" height="17"><path d="M0.8 6 L9 0.5 L17.2 6 V16 H0.8 Z" fill="#0f5fae"/><path d="M3.5 5.5 H14.5 L9 9.8 Z" fill="#fff"/><path d="M0.8 6.5 L9 12 L17.2 6.5 V16 H0.8 Z" fill="#2aa6ec"/><path d="M0.8 6.5 L9 12 L17.2 6.5 V7.5 L9 13 L0.8 7.5 Z" fill="#fff" opacity=".9"/><path d="M9 12 L17.2 16 H0.8 Z" fill="#1b90dd" opacity=".7"/></svg>
<svg style="left:184px;top:525px" width="18" height="18"><circle cx="9" cy="9" r="8.5" fill="#dd4a3b"/><path d="M9 9 L16.4 4.75 A8.5 8.5 0 0 1 9 17.5 Z" fill="#f4c20d"/><path d="M9 9 L9 17.5 A8.5 8.5 0 0 1 1.6 4.75 Z" fill="#2da94f"/><circle cx="9" cy="9" r="4.2" fill="#fff"/><circle cx="9" cy="9" r="3.2" fill="#4285f4"/></svg>
<svg style="left:219px;top:525px" width="18" height="17"><rect x="5" y="0.5" width="12.5" height="16" rx="1" fill="#2b7cd3"/><rect x="5" y="4.5" width="12.5" height="4" fill="#185abd"/><rect x="5" y="8.5" width="12.5" height="4" fill="#103f91"/><rect x="0.5" y="4" width="10" height="9.5" rx="1" fill="#185abd"/><text x="1.3" y="11.6" font-size="7.5" font-weight="bold" font-family="Liberation Sans" fill="#fff">W</text></svg>
<svg style="left:254px;top:527px" width="17" height="14"><path d="M0.5 1.5 Q0.5 0.5 1.5 0.5 H6 L7.5 2 H15.5 Q16.5 2 16.5 3 V13.5 H0.5 Z" fill="#e9b440"/><rect x="0.5" y="3.5" width="16" height="10" fill="#fcd869"/><path d="M4.5 13.5 V8.5 H12.5 V13.5 H11 V10.3 H6 V13.5 Z" fill="#2f8ad6"/></svg>
<svg style="left:289px;top:525px" width="18" height="18"><defs><linearGradient id="zg" x1="0" y1="0" x2="0" y2="1"><stop offset="0" stop-color="#2d7cf6"/><stop offset="1" stop-color="#0b48c4"/></linearGradient></defs><rect x="0.3" y="0.3" width="17.4" height="17.4" rx="7.5" fill="url(#zg)"/><text x="2.6" y="11.8" font-size="7.6" font-weight="bold" font-family="Liberation Sans" fill="#fff" letter-spacing="-0.3">zm</text></svg>
<svg style="left:779px;top:531px" width="10" height="6" fill="none" stroke="#222" stroke-width="1.1"><path d="M0.5 5.5 L5 1 L9.5 5.5"/></svg>
<svg style="left:802px;top:527px" width="9" height="13"><rect x="2" y="0.5" width="5" height="8.5" rx="2.5" fill="#111"/><path d="M0.8 6.5 Q0.8 10.5 4.5 10.5 Q8.2 10.5 8.2 6.5 M4.5 10.5 V12.5 M2.5 12.5 H6.5" fill="none" stroke="#111" stroke-width="0.9"/></svg>
<svg style="left:823px;top:530px" width="13" height="8"><rect x="0.5" y="0.5" width="10.5" height="7" fill="none" stroke="#111" stroke-width="1"/><rect x="2" y="2" width="7.5" height="4" fill="#111"/><rect x="11" y="2.5" width="1.5" height="3" fill="#111"/></svg>
<svg style="left:845px;top:529px" width="14" height="11" fill="none" stroke="#111" stroke-width="0.9"><path d="M0.5 3.5 H3 L6.5 0.5 V10.5 L3 7.5 H0.5 Z"/><path d="M8.5 3.5 Q9.5 5.5 8.5 7.5 M10.5 2 Q12.3 5.5 10.5 9 M12.3 0.8 Q14.8 5.5 12.3 10.2"/></svg>
<div class="t" style="left:867.5px;top:528.5px;font-size:9.4px;color:#1a1a1a;transform:scaleX(0.8);transform-origin:0 0;-webkit-text-stroke:0.1px #1a1a1a">РУС</div>
<div class="t" style="left:903px;top:522.5px;font-size:9.2px;color:#1a1a1a;transform:scaleX(0.82);transform-origin:0 0;-webkit-text-stroke:0.1px #1a1a1a">16:26</div>
<div class="t" style="left:893px;top:534.5px;font-size:9.2px;color:#1a1a1a;transform:scaleX(0.845);transform-origin:0 0;-webkit-text-stroke:0.1px #1a1a1a">29.01.2026</div>
<svg style="left:944px;top:528px" width="13" height="11"><path d="M0.5 0.5 H12.5 V8 H6 L3.5 10.5 V8 H0.5 Z" fill="#111"/><path d="M3 3 H10 M3 5 H10" stroke="#ebe2e0" stroke-width="0.8"/></svg>
<div class="a" style="left:966px;top:519px;width:1px;height:29px;background:#c8c2c0"></div>

</div></body></html>
